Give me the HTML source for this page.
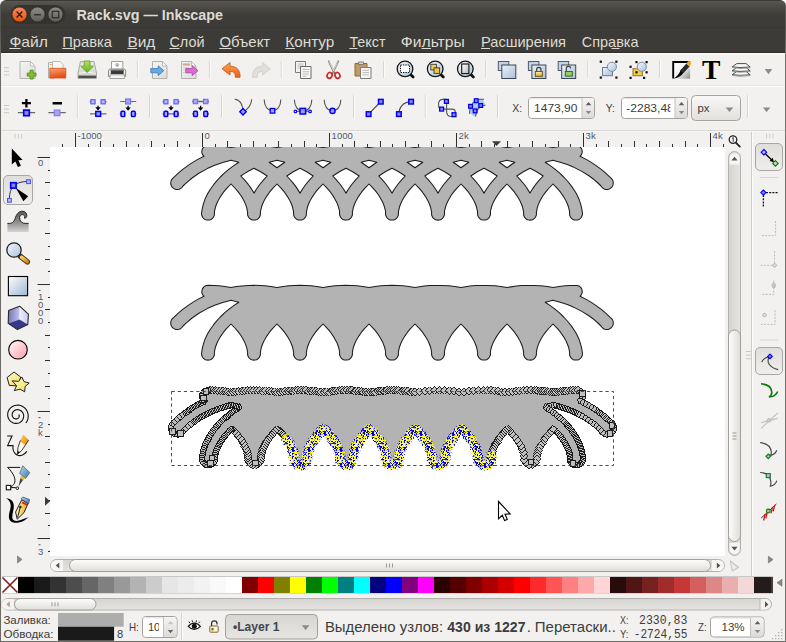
<!DOCTYPE html>
<html lang="ru"><head><meta charset="utf-8"><title>Rack.svg — Inkscape</title>
<style>
html,body{margin:0;padding:0;background:#fff;}
body{width:786px;height:642px;overflow:hidden;position:relative;font-family:"Liberation Sans",sans-serif;}
#win{position:absolute;left:0;top:0;width:786px;height:642px;background:#f2f1f0;border-radius:6px 6px 0 0;overflow:hidden;}
.abs{position:absolute;}
svg{position:absolute;left:0;top:0;overflow:visible;}
text{font-family:"Liberation Sans",sans-serif;}
.mono{font-family:"Liberation Mono",monospace;}
</style></head>
<body><div id="win">
<div id="titlebar" class="abs" style="left:0;top:0;width:786px;height:28px;background:linear-gradient(#3a3934 0,#3a3934 1px,#5b5a54 1px,#55544e 2px,#3d3c38 15px,#3c3b37 27px,#33322e 28px);"></div>
<div id="menubar" class="abs" style="left:0;top:28px;width:786px;height:25px;background:#3c3b37;"></div>
<div class="abs" style="left:0;top:52px;width:786px;height:1px;background:#2e2d2a;"></div>
<div class="abs" style="left:0;top:53px;width:786px;height:1px;background:#fcfcfb;"></div>
<div class="abs" style="left:0;top:5px;width:1px;height:637px;background:linear-gradient(#5a5954 0,#55544f 24px,#6b6a65 48px);"></div>
<div class="abs" style="left:785px;top:5px;width:1px;height:637px;background:linear-gradient(#5f5e58 0,#5a5954 24px,#74736e 48px);"></div>
<div class="abs" style="left:0;top:641px;width:786px;height:1px;background:#6e6d69;"></div>
<svg width="786" height="56" viewBox="0 0 786 56"><defs><linearGradient id="gclose" x1="0" y1="0" x2="0" y2="1"><stop offset="0" stop-color="#f58b5e"/><stop offset="1" stop-color="#e8520c"/></linearGradient><linearGradient id="gbtn" x1="0" y1="0" x2="0" y2="1"><stop offset="0" stop-color="#8e8d86"/><stop offset="1" stop-color="#5f5e58"/></linearGradient></defs><rect x="10.5" y="5" width="55" height="19" rx="9.5" fill="#34332f"/><circle cx="19.5" cy="14.5" r="7.5" fill="url(#gclose)" stroke="#3a2a22" stroke-width="0.8"/><path d="M16.6,11.6l5.8,5.8M22.4,11.6l-5.8,5.8" stroke="#3a1505" stroke-width="1.4" fill="none"/><circle cx="37.5" cy="14.5" r="7.5" fill="url(#gbtn)" stroke="#2f2e2a" stroke-width="0.8"/><path d="M34,14.8h7" stroke="#33322e" stroke-width="1.5"/><circle cx="55.5" cy="14.5" r="7.5" fill="url(#gbtn)" stroke="#2f2e2a" stroke-width="0.8"/><rect x="52.3" y="11.3" width="6.4" height="6.4" fill="none" stroke="#33322e" stroke-width="1.3"/><text x="76.5" y="20" font-size="15" fill="#dfdbd2" font-weight="bold" textLength="146.5" lengthAdjust="spacingAndGlyphs">Rack.svg — Inkscape</text><text x="9.4" y="47.3" font-size="15" fill="#dfdbd2" font-weight="normal" textLength="38.5" lengthAdjust="spacingAndGlyphs">Файл</text><rect x="9.4" y="48" width="11.1" height="1" fill="#dfdbd2"/><text x="62.3" y="47.3" font-size="15" fill="#dfdbd2" font-weight="normal" textLength="49.6" lengthAdjust="spacingAndGlyphs">Правка</text><rect x="62.3" y="48" width="11.2" height="1" fill="#dfdbd2"/><text x="127.4" y="47.3" font-size="15" fill="#dfdbd2" font-weight="normal" textLength="27.9" lengthAdjust="spacingAndGlyphs">Вид</text><rect x="127.4" y="48" width="9.6" height="1" fill="#dfdbd2"/><text x="169.4" y="47.3" font-size="15" fill="#dfdbd2" font-weight="normal" textLength="35.1" lengthAdjust="spacingAndGlyphs">Слой</text><rect x="169.4" y="48" width="10.1" height="1" fill="#dfdbd2"/><text x="219.4" y="47.3" font-size="15" fill="#dfdbd2" font-weight="normal" textLength="50.8" lengthAdjust="spacingAndGlyphs">Объект</text><rect x="219.4" y="48" width="12.1" height="1" fill="#dfdbd2"/><text x="285.3" y="47.3" font-size="15" fill="#dfdbd2" font-weight="normal" textLength="49.0" lengthAdjust="spacingAndGlyphs">Контур</text><rect x="285.3" y="48" width="9.7" height="1" fill="#dfdbd2"/><text x="349.4" y="47.3" font-size="15" fill="#dfdbd2" font-weight="normal" textLength="36.1" lengthAdjust="spacingAndGlyphs">Текст</text><rect x="349.4" y="48" width="8.1" height="1" fill="#dfdbd2"/><text x="400.8" y="47.3" font-size="15" fill="#dfdbd2" font-weight="normal" textLength="64.0" lengthAdjust="spacingAndGlyphs">Фильтры</text><rect x="421.5" y="48" width="9.5" height="1" fill="#dfdbd2"/><text x="481" y="47.3" font-size="15" fill="#dfdbd2" font-weight="normal" textLength="85" lengthAdjust="spacingAndGlyphs">Расширения</text><rect x="481" y="48" width="9" height="1" fill="#dfdbd2"/><text x="581.8" y="47.3" font-size="15" fill="#dfdbd2" font-weight="normal" textLength="56.7" lengthAdjust="spacingAndGlyphs">Справка</text><rect x="611.5" y="48" width="8.0" height="1" fill="#dfdbd2"/></svg><svg width="786" height="642" viewBox="0 0 786 642"><defs><linearGradient id="gpaper" x1="0" y1="0" x2="1" y2="1"><stop offset="0" stop-color="#f6f6f5"/><stop offset="1" stop-color="#dcdcda"/></linearGradient><linearGradient id="gfolder" x1="0" y1="0" x2="0.300" y2="1"><stop offset="0" stop-color="#f9a672"/><stop offset="1" stop-color="#e54c14"/></linearGradient><linearGradient id="gdrive" x1="0" y1="0" x2="0" y2="1"><stop offset="0" stop-color="#e9e9e7"/><stop offset="1" stop-color="#cfcfcd"/></linearGradient><linearGradient id="ggreen" x1="0" y1="0" x2="0" y2="1"><stop offset="0" stop-color="#b4e070"/><stop offset="1" stop-color="#62b41c"/></linearGradient><linearGradient id="gorange" x1="0" y1="0" x2="0" y2="1"><stop offset="0" stop-color="#fba55a"/><stop offset="1" stop-color="#e8601a"/></linearGradient><linearGradient id="glens" x1="0" y1="0" x2="1" y2="1"><stop offset="0" stop-color="#f4f8fc"/><stop offset="1" stop-color="#a9c3de"/></linearGradient><linearGradient id="gpage" x1="0" y1="0" x2="1" y2="1"><stop offset="0" stop-color="#ffffff"/><stop offset="1" stop-color="#b8b8b8"/></linearGradient><linearGradient id="gbluebox" x1="0" y1="0" x2="1" y2="1"><stop offset="0" stop-color="#eef3f9"/><stop offset="1" stop-color="#a9bfd8"/></linearGradient><linearGradient id="gyellow" x1="0" y1="0" x2="0" y2="1"><stop offset="0" stop-color="#fff3b0"/><stop offset="1" stop-color="#eaa410"/></linearGradient><linearGradient id="gfs" x1="0" y1="0" x2="1" y2="1"><stop offset="0" stop-color="#ffffff"/><stop offset="0.55" stop-color="#f4f4f4"/><stop offset="1" stop-color="#8a8a8a"/></linearGradient><linearGradient id="gspin" x1="0" y1="0" x2="0" y2="1"><stop offset="0" stop-color="#f6f5f4"/><stop offset="1" stop-color="#dddbd8"/></linearGradient><linearGradient id="gcombo" x1="0" y1="0" x2="0" y2="1"><stop offset="0" stop-color="#f9f8f7"/><stop offset="1" stop-color="#e2e0dd"/></linearGradient><linearGradient id="gpressed" x1="0" y1="0" x2="0" y2="1"><stop offset="0" stop-color="#e0dedb"/><stop offset="1" stop-color="#efeeec"/></linearGradient><linearGradient id="gtweak" x1="0" y1="0" x2="0" y2="1"><stop offset="0" stop-color="#5a5a5a"/><stop offset="0.5" stop-color="#8a8a8a"/><stop offset="1" stop-color="#d4d4d4"/></linearGradient><linearGradient id="grect" x1="0" y1="0" x2="1" y2="1"><stop offset="0" stop-color="#ffffff"/><stop offset="1" stop-color="#9db6d0"/></linearGradient><linearGradient id="gpink" x1="0" y1="0" x2="1" y2="1"><stop offset="0" stop-color="#ffffff"/><stop offset="1" stop-color="#ff98a8"/></linearGradient><linearGradient id="gstar" x1="0" y1="0" x2="1" y2="1"><stop offset="0" stop-color="#fffccc"/><stop offset="1" stop-color="#efdc58"/></linearGradient><linearGradient id="gbox1" x1="0" y1="0" x2="1" y2="0"><stop offset="0" stop-color="#7474bc"/><stop offset="1" stop-color="#c4c4ec"/></linearGradient><linearGradient id="gbox2" x1="0" y1="0" x2="1" y2="0"><stop offset="0" stop-color="#f0f0ff"/><stop offset="1" stop-color="#c8c8f0"/></linearGradient><linearGradient id="ghandle" x1="0" y1="0" x2="1" y2="1"><stop offset="0" stop-color="#ffd060"/><stop offset="1" stop-color="#e08800"/></linearGradient><linearGradient id="gpenblue" x1="0" y1="0" x2="1" y2="1"><stop offset="0" stop-color="#b8dcf0"/><stop offset="1" stop-color="#3878a8"/></linearGradient><linearGradient id="gnib" x1="0" y1="0" x2="1" y2="0"><stop offset="0" stop-color="#fff8c0"/><stop offset="1" stop-color="#e8a818"/></linearGradient></defs><rect x="1" y="85" width="784" height="1" fill="#e9e8e6"/><rect x="1" y="86" width="784" height="1" fill="#fcfcfb"/><rect x="4" y="67.2" width="5" height="1" fill="#c9c7c3"/><rect x="4" y="70.8" width="5" height="1" fill="#c9c7c3"/><rect x="4" y="74.4" width="5" height="1" fill="#c9c7c3"/><rect x="136.9" y="61" width="1" height="17" fill="#d6d4d0"/><rect x="137.9" y="61" width="1" height="17" fill="#fbfbfa"/><rect x="208.9" y="61" width="1" height="17" fill="#d6d4d0"/><rect x="209.9" y="61" width="1" height="17" fill="#fbfbfa"/><rect x="280.8" y="61" width="1" height="17" fill="#d6d4d0"/><rect x="281.8" y="61" width="1" height="17" fill="#fbfbfa"/><rect x="383.1" y="61" width="1" height="17" fill="#d6d4d0"/><rect x="384.1" y="61" width="1" height="17" fill="#fbfbfa"/><rect x="485.2" y="61" width="1" height="17" fill="#d6d4d0"/><rect x="486.2" y="61" width="1" height="17" fill="#fbfbfa"/><rect x="587.3" y="61" width="1" height="17" fill="#d6d4d0"/><rect x="588.3" y="61" width="1" height="17" fill="#fbfbfa"/><rect x="659.1" y="61" width="1" height="17" fill="#d6d4d0"/><rect x="660.1" y="61" width="1" height="17" fill="#fbfbfa"/><g id="i-new"><path d="M20,61.500h10.500l4.500,4.500v12.500h-15z" fill="url(#gpaper)" stroke="#b4b4b0" stroke-width="1"/><path d="M30.500,61.500v4.500h4.500z" fill="#fbfbfb" stroke="#b4b4b0" stroke-width="0.800" stroke-linejoin="round"/><path d="M30.100,70.200h3v2.900h2.900v3h-2.900v2.900h-3v-2.900h-2.900v-3h2.900z" fill="#84bd3a" stroke="#5c9414" stroke-width="1" stroke-linejoin="round"/></g><g id="i-open"><path d="M48.500,62.500h6v15.500h-6z" fill="#f0f0ee" stroke="#b0b0ac" stroke-width="1"/><path d="M52.500,61.500h7.500l3,3v12h-10.500z" fill="#f6f6f4" stroke="#b4b4b0" stroke-width="0.900"/><rect x="49.800" y="64" width="2" height="1" fill="#f0a050"/><path d="M49.800,68.300h16v9.700h-16z" fill="url(#gfolder)" stroke="#dc4e1a" stroke-width="0.800"/></g><g id="i-save"><path d="M80.500,61.500h13.500l2.500,11.500v5.200h-18.500v-5.200z" fill="url(#gdrive)" stroke="#a9a9a6" stroke-width="1"/><path d="M78.300,75.200h17.900v3.200h-17.900z" fill="#8c8c8a"/><rect x="78.600" y="76.300" width="17.300" height="1.300" fill="#2e2e2e"/><path d="M79,73.500q8,-3 16.500,0" fill="none" stroke="#f4f4f2" stroke-width="1"/><path d="M84.200,61h5.800v5.200h3.400l-6.300,6.200l-6.300,-6.200h3.400z" fill="url(#ggreen)" stroke="#6aa51c" stroke-width="0.900" stroke-linejoin="round"/></g><g id="i-print"><path d="M111.500,61.500h11.300v8h-11.300z" fill="#fbfbfa" stroke="#a0a09c" stroke-width="1"/><path d="M114.700,64.600h5l-2.500,2.700z" fill="#a4a4a2"/><rect x="116.200" y="63" width="2" height="1.800" fill="#b4b4b2"/><path d="M108.500,71q0,-2 2,-2h13.200q2,0 2,2v5.500h-17.200z" fill="#ededeb" stroke="#8a8a88" stroke-width="1"/><rect x="110.800" y="69.800" width="12.800" height="4.200" fill="#3a3a3a"/><rect x="110.800" y="69.800" width="12.800" height="1.200" fill="#6a6a68"/><path d="M110,74.800h14.500v3.700h-14.500z" fill="#f6f6f4" stroke="#9a9a98" stroke-width="0.900"/><rect x="123.500" y="74.300" width="1.400" height="1.200" fill="#7fd04f"/></g><g id="i-import"><path d="M152.5,61.5h10l4.5,4.5v12.5h-14.5z" fill="url(#gpaper)" stroke="#b0b0ac" stroke-width="1"/><path d="M162.5,61.5v4.5h4.5z" fill="#fbfbfb" stroke="#b0b0ac" stroke-width="0.8"/><path d="M150.8,68.6h7.4v-2.8l5.6,4.9l-5.6,4.9v-2.8h-7.4z" fill="#6aa8e2" stroke="#3f80c4" stroke-width="0.9"/></g><g id="i-export"><path d="M181.5,61.5h10l4.5,4.5v12.5h-14.5z" fill="url(#gpaper)" stroke="#b0b0ac" stroke-width="1"/><path d="M191.5,61.5v4.5h4.5z" fill="#fbfbfb" stroke="#b0b0ac" stroke-width="0.8"/><rect x="183" y="63.4" width="7" height="2.2" fill="#d9a48f"/><path d="M183,67.5h6M183,70h4M183,72.5h4" stroke="#c9c9c5" stroke-width="0.9"/><path d="M185.8,68.6h6.4v-2.8l5.8,4.9l-5.8,4.9v-2.8h-6.4z" fill="#d86ed2" stroke="#b646ae" stroke-width="0.9"/></g><g id="i-undo"><path d="M222,68.800L230,62.500V66.200C236.600,66.200 240.300,70 240.100,77.200H235.300C235.500,73.200 233.800,71.400 230,71.400V75.100Z" fill="url(#gorange)" stroke="#cf5c14" stroke-width="0.900" stroke-linejoin="round"/></g><g id="i-redo"><path d="M270.500,68.800L262.500,62.500V66.200C255.900,66.200 252.200,70 252.400,77.200H257.200C257,73.200 258.700,71.400 262.500,71.400V75.100Z" fill="#dedfd9" stroke="#d0d1cb" stroke-width="0.900" stroke-linejoin="round"/></g><g id="i-copy"><path d="M295.5,61.5h10v11h-10z" fill="#f4f4f2" stroke="#7a7a78" stroke-width="1"/><path d="M297.5,64h6M297.5,66h6M297.5,68h3" stroke="#b5b5b2" stroke-width="0.9"/><path d="M300.5,66.5h10.5v12h-10.5z" fill="#f8f8f6" stroke="#6a6a68" stroke-width="1"/><path d="M302.5,69.5h6.5M302.5,71.8h6.5M302.5,74.1h6.5M302.5,76.3h4" stroke="#b0b0ad" stroke-width="0.9"/></g><g id="i-cut"><path d="M328.8,61.3l5.3,11.4M338.2,61.3l-5.3,11.4" stroke="#8d8d8b" stroke-width="1.9" stroke-linecap="round"/><path d="M329.3,61.5l4.4,9.5M337.7,61.5l-4.4,9.5" stroke="#e9e9e7" stroke-width="0.8"/><ellipse cx="329.6" cy="75.4" rx="2.4" ry="3" fill="none" stroke="#cc2a2a" stroke-width="1.7" transform="rotate(25 329.6 75.4)"/><ellipse cx="337.4" cy="75.4" rx="2.4" ry="3" fill="none" stroke="#cc2a2a" stroke-width="1.7" transform="rotate(-25 337.4 75.4)"/></g><g id="i-paste"><path d="M355,63.5h12v12.5h-12z" fill="#c49a62" stroke="#8a6a3c" stroke-width="1"/><path d="M358.5,62h5v2.5h-5z" fill="#d8d8d6" stroke="#77777a" stroke-width="0.9"/><path d="M360.5,67.5h10.5v11h-10.5z" fill="#f6f6f4" stroke="#7d7d7b" stroke-width="1"/><path d="M362.5,70.3h6.5M362.5,72.6h6.5M362.5,74.9h6.5" stroke="#b5b5b2" stroke-width="0.9"/></g><g><path d="M410.8,74.7l2.300,2.300" stroke="#111" stroke-width="2.800" stroke-linecap="round"/><circle cx="405" cy="68.9" r="7.800" fill="url(#glens)" stroke="#141414" stroke-width="1.300"/><rect x="400.5" y="65" width="9" height="7.5" fill="#fff" stroke="#111" stroke-width="1" stroke-dasharray="1.4 1"/></g><g><path d="M441.0,74.7l2.300,2.300" stroke="#111" stroke-width="2.800" stroke-linecap="round"/><circle cx="435.2" cy="68.9" r="7.800" fill="url(#glens)" stroke="#141414" stroke-width="1.300"/><rect x="430.8" y="64.3" width="5.6" height="5.6" fill="#f0d060" stroke="#3a3a3a" stroke-width="0.9"/><rect x="434" y="67.8" width="5.6" height="5.6" fill="#f3c23a" stroke="#3a3a3a" stroke-width="0.9"/></g><g><path d="M471.1,74.7l2.300,2.300" stroke="#111" stroke-width="2.800" stroke-linecap="round"/><circle cx="465.3" cy="68.9" r="7.800" fill="url(#glens)" stroke="#141414" stroke-width="1.300"/><rect x="461.7" y="64" width="7.2" height="9.6" fill="url(#gpage)" stroke="#111" stroke-width="1.1"/></g><g><rect x="498.3" y="61.5" width="10.5" height="9" fill="#c4d3e4" stroke="#4e5a6a" stroke-width="1"/><rect x="501.8" y="65" width="14" height="13.5" fill="url(#gbluebox)" stroke="#3c4654" stroke-width="1"/></g><g><rect x="528.4" y="61.5" width="10.5" height="9" fill="#c4d3e4" stroke="#4e5a6a" stroke-width="1"/><rect x="531.9" y="65" width="14" height="13.5" fill="url(#gbluebox)" stroke="#3c4654" stroke-width="1"/><path d="M536.600,71.500v-2a2.200,2.200 0 0 1 4.400,0v2" fill="none" stroke="#444" stroke-width="1.200"/><rect x="535.300" y="71.500" width="7" height="4.800" fill="url(#gyellow)" stroke="#5e4a10" stroke-width="0.900"/></g><g><rect x="558.2" y="61.5" width="10.5" height="9" fill="#c4d3e4" stroke="#4e5a6a" stroke-width="1"/><rect x="561.7" y="65" width="14" height="13.5" fill="url(#gbluebox)" stroke="#3c4654" stroke-width="1"/><path d="M566.300,71.500v-2.600a2.200,2.200 0 0 1 4.400,-0.600" fill="none" stroke="#444" stroke-width="1.200"/><rect x="565.300" y="71.500" width="7" height="4.600" fill="#8fd05e" stroke="#2f5e14" stroke-width="0.900"/></g><g id="i-group"><rect x="602.500" y="67.500" width="10" height="8.200" fill="url(#gbluebox)" stroke="#6d7f95" stroke-width="1"/><circle cx="611.900" cy="66.800" r="4.600" fill="url(#glens)" stroke="#7d8ea4" stroke-width="1"/><rect x="599.7" y="60.6" width="2.200" height="2.200" fill="#111"/><rect x="615.3" y="60.6" width="2.200" height="2.200" fill="#111"/><rect x="599.7" y="76.5" width="2.200" height="2.200" fill="#111"/><rect x="615.3" y="76.5" width="2.200" height="2.200" fill="#111"/></g><g id="i-ungroup"><rect x="633" y="68.700" width="9.400" height="7" fill="#f4cc48" stroke="#8a7630" stroke-width="1"/><circle cx="641.800" cy="66.800" r="4.600" fill="url(#glens)" stroke="#7d8ea4" stroke-width="1"/><rect x="629.5" y="65.7" width="2.200" height="2.200" fill="#111"/><rect x="635.4" y="61.0" width="2.200" height="2.200" fill="#111"/><rect x="645.5" y="61.0" width="2.200" height="2.200" fill="#111"/><rect x="645.5" y="71.2" width="2.200" height="2.200" fill="#111"/><rect x="629.5" y="76.8" width="2.200" height="2.200" fill="#111"/><rect x="643.0" y="76.8" width="2.200" height="2.200" fill="#111"/><rect x="635.4" y="71.2" width="2.200" height="2.200" fill="#111"/></g><g id="i-fill"><path d="M672.500,61.300h17.600v17.300h-17.600z" fill="url(#gfs)" stroke="none"/><path d="M673.200,78.600v-16.600h16.900" fill="none" stroke="#000" stroke-width="1.900"/><path d="M673.800,78.500c3.600,-0.200 7.400,-2 10,-6.200l-3,-2.600c-1.400,3.800 -3.800,6.600 -7,8.800z" fill="#0a0a0a"/><path d="M680.200,70.400l6.200,-7l3.300,2.900l-6.300,6.900z" fill="#2a2a2a"/><path d="M686.200,63.600l2.600,-2.800q2.200,0.500 2.400,2.900l-2,2.700z" fill="#f4a91c"/></g><text x="702" y="79" font-size="27" font-weight="bold" fill="#000" textLength="18.4" lengthAdjust="spacingAndGlyphs" style="font-family:'Liberation Serif',serif">T</text><g id="i-layers"><path d="M736.800,71.4l9.200,0l4.200,3.400l-10,0.500l-8,-0.600z" fill="#f8f8f6" stroke="#3a3a3a" stroke-width="0.900" stroke-linejoin="round"/><path d="M732.400,74.9l7.800,0.700l10,-0.600v1l-10,0.700l-7.800,-0.800z" fill="#9a9a98"/><path d="M736.800,67.5l9.200,0l4.200,3.400l-10,0.500l-8,-0.600z" fill="#f8f8f6" stroke="#3a3a3a" stroke-width="0.900" stroke-linejoin="round"/><path d="M732.400,71.0l7.800,0.700l10,-0.600v1l-10,0.700l-7.800,-0.800z" fill="#9a9a98"/><path d="M736.800,63.6l9.200,0l4.200,3.400l-10,0.500l-8,-0.600z" fill="#f8f8f6" stroke="#3a3a3a" stroke-width="0.900" stroke-linejoin="round"/><path d="M732.400,67.1l7.800,0.700l10,-0.600v1l-10,0.700l-7.800,-0.800z" fill="#9a9a98"/></g><path d="M764.7,69h7.6l-3.8,5.2z" fill="#8c8b86"/><rect x="4" y="105.0" width="5" height="1" fill="#c9c7c3"/><rect x="4" y="108.6" width="5" height="1" fill="#c9c7c3"/><rect x="4" y="112.2" width="5" height="1" fill="#c9c7c3"/><rect x="76.9" y="95" width="1" height="23" fill="#d6d4d0"/><rect x="77.9" y="95" width="1" height="23" fill="#fbfbfa"/><rect x="149.0" y="95" width="1" height="23" fill="#d6d4d0"/><rect x="150.0" y="95" width="1" height="23" fill="#fbfbfa"/><rect x="221.0" y="95" width="1" height="23" fill="#d6d4d0"/><rect x="222.0" y="95" width="1" height="23" fill="#fbfbfa"/><rect x="353.1" y="95" width="1" height="23" fill="#d6d4d0"/><rect x="354.1" y="95" width="1" height="23" fill="#fbfbfa"/><rect x="424.8" y="95" width="1" height="23" fill="#d6d4d0"/><rect x="425.8" y="95" width="1" height="23" fill="#fbfbfa"/><rect x="497.0" y="95" width="1" height="23" fill="#d6d4d0"/><rect x="498.0" y="95" width="1" height="23" fill="#fbfbfa"/><rect x="747.1" y="95" width="1" height="23" fill="#d6d4d0"/><rect x="748.1" y="95" width="1" height="23" fill="#fbfbfa"/><path d="M26.4,99v8.4M21.9,103.2h9" stroke="#000" stroke-width="2.3"/><path d="M17.9,112.6h17.2" stroke="#6a6a6a" stroke-width="1.2"/><rect x="23.70" y="110.10" width="5.6" height="5.6" fill="#8a8ad8" stroke="#0000ff" stroke-width="1.7"/><path d="M52.6,103.2h9.4" stroke="#000" stroke-width="2.5"/><path d="M48.3,112.6h17.5" stroke="#6a6a6a" stroke-width="1.2"/><rect x="54.30" y="110.10" width="5.6" height="5.6" fill="#a6a6ee" stroke="#7c7cf4" stroke-width="1.2"/><path d="M89.6,101.8h4M102,101.8h4.6" stroke="#6a6a6a" stroke-width="1.1"/><rect x="90.90" y="99.70" width="4.2" height="4.2" fill="#b8b8f4" stroke="#4a4aff" stroke-width="1.0"/><rect x="101.00" y="99.70" width="4.2" height="4.2" fill="#b8b8f4" stroke="#4a4aff" stroke-width="1.0"/><path d="M98,105.8V108.4" stroke="#000" stroke-width="1.300"/><path d="M95.3,107.2h5.400l-2.700,3.200z" fill="#000"/><path d="M90,113.9h16.5" stroke="#6a6a6a" stroke-width="1.2"/><rect x="95.80" y="111.50" width="4.8" height="4.8" fill="#9c9ce4" stroke="#0000ff" stroke-width="1.5"/><path d="M120.2,101.5h16" stroke="#6a6a6a" stroke-width="1.2"/><rect x="125.60" y="99.00" width="5" height="5" fill="#a6a6ee" stroke="#6c6cf8" stroke-width="1.1"/><path d="M128.1,105.8V108.8" stroke="#000" stroke-width="1.300"/><path d="M125.39999999999999,107.6h5.400l-2.700,3.200z" fill="#000"/><path d="M119.8,113.9h2M134,113.9h2.4" stroke="#6a6a6a" stroke-width="1.1"/><rect x="121.00" y="111.30" width="3.800" height="5.200" rx="1.100" fill="#a8a8e8" stroke="#0000ff" stroke-width="1.500"/><rect x="131.40" y="111.30" width="3.800" height="5.200" rx="1.100" fill="#a8a8e8" stroke="#0000ff" stroke-width="1.500"/><path d="M162.4,101.8h3M177,101.8h2.6" stroke="#6a6a6a" stroke-width="1.1"/><rect x="163.80" y="99.70" width="4.2" height="4.2" fill="#b8b8f4" stroke="#4a4aff" stroke-width="1.0"/><rect x="174.00" y="99.70" width="4.2" height="4.2" fill="#b8b8f4" stroke="#4a4aff" stroke-width="1.0"/><path d="M171,105.8V108.4" stroke="#000" stroke-width="1.300"/><path d="M168.3,107.2h5.400l-2.700,3.200z" fill="#000"/><path d="M162.6,113.9h16.6" stroke="#6a6a6a" stroke-width="1.4"/><rect x="164.00" y="111.30" width="3.800" height="5.200" rx="1.100" fill="#a8a8e8" stroke="#0000ff" stroke-width="1.500"/><rect x="174.20" y="111.30" width="3.800" height="5.200" rx="1.100" fill="#a8a8e8" stroke="#0000ff" stroke-width="1.500"/><path d="M192.2,101.5h16.8" stroke="#6a6a6a" stroke-width="1.3"/><rect x="193.30" y="99.30" width="4.4" height="4.4" fill="#a6a6ee" stroke="#6c6cf8" stroke-width="1.1"/><rect x="203.50" y="99.30" width="4.4" height="4.4" fill="#a6a6ee" stroke="#6c6cf8" stroke-width="1.1"/><path d="M200.6,105.8V108.8" stroke="#000" stroke-width="1.300"/><path d="M197.9,107.6h5.400l-2.700,3.200z" fill="#000"/><path d="M192.2,113.9h2M207,113.9h2" stroke="#6a6a6a" stroke-width="1.1"/><rect x="193.60" y="111.30" width="3.800" height="5.200" rx="1.100" fill="#a8a8e8" stroke="#0000ff" stroke-width="1.500"/><rect x="203.80" y="111.30" width="3.800" height="5.200" rx="1.100" fill="#a8a8e8" stroke="#0000ff" stroke-width="1.500"/><path d="M234.7,99.2c5.6,0.4 8,5 8.3,12.7c5.6,-3 8.4,-7.6 8.7,-12.7" fill="none" stroke="#555" stroke-width="1.1"/><path d="M243,108.6l3.2,3.2l-3.2,3.2l-3.2,-3.2z" fill="#9c9ce0" stroke="#0000ff" stroke-width="1.4"/><path d="M264.2,99.6c0,6.4 3.2,11 8.3,11s8.3,-4.6 8.3,-11" fill="none" stroke="#555" stroke-width="1.1"/><rect x="270.20" y="108.50" width="4.6" height="4.6" fill="#a8a8ee" stroke="#0000ff" stroke-width="1.3"/><path d="M294.4,99.8c0,6.6 3.4,11.2 8.7,11.2s8.7,-4.6 8.7,-11.2" fill="none" stroke="#555" stroke-width="1.1"/><path d="M296,111.3h14" stroke="#555" stroke-width="1"/><rect x="300.00" y="108.40" width="5.6" height="5.6" fill="#9c9ce8" stroke="#0000ff" stroke-width="1.5"/><circle cx="295.4" cy="111.4" r="1.3" fill="#fff" stroke="#0000ff" stroke-width="1.2"/><circle cx="310.1" cy="111.4" r="1.3" fill="#fff" stroke="#0000ff" stroke-width="1.2"/><path d="M324.2,99.8c0,6.4 3.2,11 8.3,11s8.3,-4.6 8.3,-11" fill="none" stroke="#555" stroke-width="1.1"/><circle cx="332.5" cy="110.9" r="2.6" fill="#9c9ce8" stroke="#0000ff" stroke-width="1.4"/><path d="M368.6,114.1L380.8,101.7" stroke="#444" stroke-width="1.2"/><rect x="366.30" y="111.80" width="4.6" height="4.6" fill="#8a8ad8" stroke="#0000ff" stroke-width="1.5"/><rect x="378.50" y="99.40" width="4.6" height="4.6" fill="#8a8ad8" stroke="#0000ff" stroke-width="1.5"/><path d="M398.9,114.1c0,-7 4.5,-12 12.2,-12.4" fill="none" stroke="#444" stroke-width="1.2"/><rect x="396.60" y="111.80" width="4.6" height="4.6" fill="#8a8ad8" stroke="#0000ff" stroke-width="1.5"/><rect x="408.80" y="99.40" width="4.6" height="4.6" fill="#8a8ad8" stroke="#0000ff" stroke-width="1.5"/><path d="M446.4,99.4h-3.2q-4.6,0 -4.6,4.6v1.2q0,3.9 3,3.9h10.5q3.2,0 3.2,3.2v2.4M446.6,101.4v9.6q0,5.5 4.5,5.5h3" fill="none" stroke="#555" stroke-width="1.1"/><rect x="444.45" y="99.45" width="3.9" height="3.9" fill="#8a8ad8" stroke="#0000ff" stroke-width="1.3"/><rect x="439.65" y="107.15" width="3.9" height="3.9" fill="#8a8ad8" stroke="#0000ff" stroke-width="1.3"/><rect x="452.05" y="112.75" width="3.9" height="3.9" fill="#8a8ad8" stroke="#0000ff" stroke-width="1.3"/><path d="M470,113.6l0.4,-6.6l5,-7.4h7.4l2,4.4l-4.4,2.6l-4.6,7.6l-0.6,2.6z" fill="#a9c9ea" stroke="none"/><path d="M469.4,113.8c0.2,-6 2.4,-10.8 6.4,-13.6M475.6,116.6c0.2,-6.4 3.6,-10.6 10,-11.6M476,99.3h8" fill="none" stroke="#555" stroke-width="1.1"/><rect x="474.35" y="98.85" width="3.7" height="3.7" fill="#8a8ad8" stroke="#0000ff" stroke-width="1.3"/><rect x="468.65" y="104.45" width="3.7" height="3.7" fill="#8a8ad8" stroke="#0000ff" stroke-width="1.3"/><rect x="478.85" y="103.65" width="3.7" height="3.7" fill="#8a8ad8" stroke="#0000ff" stroke-width="1.3"/><rect x="473.25" y="109.05" width="3.7" height="3.7" fill="#8a8ad8" stroke="#0000ff" stroke-width="1.3"/><text x="512.2" y="111.8" font-size="11" fill="#3c3c3c" font-weight="normal" textLength="9.9" lengthAdjust="spacingAndGlyphs">X:</text><rect x="528.5" y="97.5" width="66" height="21" rx="3.2" fill="#fff" stroke="#a3a19d" stroke-width="1"/><path d="M582,98H591.5a2.5,2.5 0 0 1 2.5,2.5V115.5a2.5,2.5 0 0 1 -2.5,2.5H582z" fill="url(#gspin)"/><rect x="581.5" y="98" width="1" height="20" fill="#c4c2be"/><path d="M585.7,105.3h5.600l-2.800,-3.300z" fill="#5f5e5a"/><path d="M585.7,110.9h5.600l-2.800,3.300z" fill="#8a8985"/><rect x="529" y="98" width="52.5" height="1.2" fill="#e4e2df" opacity=".8"/><text x="534.1" y="111.8" font-size="11" fill="#3c3c3c" font-weight="normal" textLength="43.3" lengthAdjust="spacingAndGlyphs">1473,90</text><text x="605.7" y="111.8" font-size="11" fill="#3c3c3c" font-weight="normal" textLength="9.1" lengthAdjust="spacingAndGlyphs">Y:</text><rect x="621.5" y="97.5" width="66" height="21" rx="3.2" fill="#fff" stroke="#a3a19d" stroke-width="1"/><path d="M675,98H684.5a2.5,2.5 0 0 1 2.5,2.5V115.5a2.5,2.5 0 0 1 -2.5,2.5H675z" fill="url(#gspin)"/><rect x="674.5" y="98" width="1" height="20" fill="#c4c2be"/><path d="M678.7,105.3h5.600l-2.800,-3.300z" fill="#5f5e5a"/><path d="M678.7,110.9h5.600l-2.800,3.300z" fill="#8a8985"/><rect x="622" y="98" width="52.5" height="1.2" fill="#e4e2df" opacity=".8"/><clipPath id="cy"><rect x="622" y="98" width="48.400" height="20"/></clipPath><g clip-path="url(#cy)"><text x="626.3" y="111.8" font-size="11" fill="#3c3c3c" font-weight="normal" textLength="47.5" lengthAdjust="spacingAndGlyphs">-2283,48</text></g><rect x="691.5" y="95.5" width="49" height="25" rx="4" fill="url(#gcombo)" stroke="#a6a4a0" stroke-width="1"/><text x="697.5" y="111.8" font-size="11" fill="#3c3c3c" font-weight="normal" textLength="12" lengthAdjust="spacingAndGlyphs">px</text><path d="M725.7,107.4h7.6l-3.8,4.6z" fill="#8c8b86"/><path d="M762.9,107.4h7.4l-3.7,4.6z" fill="#8c8b86"/><rect x="14.5" y="134" width="1" height="4.5" fill="#cfcdc9"/><rect x="17.8" y="134" width="1" height="4.5" fill="#cfcdc9"/><rect x="21.1" y="134" width="1" height="4.5" fill="#cfcdc9"/><path d="M11.8,148.6V164.4L15.3,161.4L17.9,167L20.9,165.7L18.4,160.2L22.6,159.9Z" fill="#000"/><rect x="3.5" y="175.5" width="29" height="29" rx="4.5" fill="url(#gpressed)" stroke="#a9a7a3" stroke-width="1"/><path d="M9.4,198c0.2,-5 1.2,-8.5 3.8,-11.8c3,-3 7,-4.3 13,-4.7" fill="none" stroke="#333" stroke-width="1"/><rect x="10.70" y="182.70" width="5.4" height="5.4" fill="#8484dc" stroke="#0000ff" stroke-width="1.7"/><rect x="26.60" y="179.80" width="3.8" height="3.8" fill="#b8b8f4" stroke="#4a4aff" stroke-width="1.0"/><rect x="7.50" y="198.40" width="3.8" height="3.8" fill="#b8b8f4" stroke="#4a4aff" stroke-width="1.0"/><path d="M15.6,187.8L28.2,196.2L23.4,201.2Z" fill="#000"/><path d="M7.4,232V223.4h2.2c3.4,0 4.6,-2.4 6,-6.2c1.4,-3.8 3.6,-6 6.6,-6c3,0 4.6,2 4.6,4.4c0,1.6 -1,2.6 -2.2,2.6c0.6,-2.2 -0.6,-3.6 -2.4,-3.6c-2,0 -3,1.8 -2.4,4.6c0.6,2.6 2.6,4.2 5.4,4.2H28.6V232Z" fill="url(#gtweak)"/><path d="M7.4,223.4h2.2c3.4,0 4.6,-2.4 6,-6.2c1.4,-3.8 3.6,-6 6.6,-6c3,0 4.6,2 4.6,4.4c0,1.6 -1,2.6 -2.2,2.6c0.6,-2.2 -0.6,-3.6 -2.4,-3.6c-2,0 -3,1.8 -2.4,4.6c0.6,2.6 2.6,4.2 5.4,4.2H28.6" fill="none" stroke="#222" stroke-width="1"/><path d="M20,256l7.400,5.800" stroke="#3c3c3c" stroke-width="5.400" stroke-linecap="round"/><path d="M21.600,257.300l5.600,4.400" stroke="url(#ghandle)" stroke-width="3.600" stroke-linecap="round"/><circle cx="14" cy="250" r="7.2" fill="url(#glens)" stroke="#222" stroke-width="1.3"/><rect x="8.4" y="276.5" width="19.2" height="19.2" fill="url(#grect)" stroke="#000" stroke-width="1.1"/><path d="M19.6,306.2L28.4,314.2L27.8,324.4L17.4,329.6L8.2,323.4L8.6,310.4Z" fill="#e4e4fa" stroke="none"/><path d="M19.6,306.2L19.4,319.6L8.2,323.4L8.6,310.4Z" fill="url(#gbox1)"/><path d="M19.6,306.2L28.4,314.2L27.8,324.4L19.4,319.6Z" fill="url(#gbox2)"/><path d="M19.4,319.6L27.8,324.4L17.4,329.6L8.2,323.4Z" fill="#38388a"/><path d="M19.6,306.2L28.4,314.2L27.8,324.4L17.4,329.6L8.2,323.4L8.6,310.4Z" fill="none" stroke="#2a2a2a" stroke-width="1.1" stroke-linejoin="round"/><circle cx="18" cy="349.7" r="9.3" fill="url(#gpink)" stroke="#000" stroke-width="1.1"/><path d="M14,372L20.7,377L18.2,386L9.3,385.4L7.1,377.5Z" fill="url(#gstar)" stroke="#222" stroke-width="1" stroke-linejoin="round"/><path d="M21.8,377L24,381.6L29.2,383L25.2,386.4L24.6,391.8L20.2,389.2L14.2,390.6L16.6,385.8L12.2,380.8L18.6,381.4Z" fill="url(#gstar)" stroke="#222" stroke-width="1" stroke-linejoin="round"/><path d="M18.7,414.6 18.9,414.9 19.1,415.2 19.2,415.5 19.2,415.9 19.2,416.3 19.1,416.7 19.0,417.2 18.8,417.6 18.5,417.9 18.1,418.3 17.7,418.5 17.2,418.7 16.7,418.9 16.2,418.9 15.6,418.9 15.0,418.8 14.5,418.6 13.9,418.2 13.4,417.8 13.0,417.3 12.7,416.8 12.4,416.1 12.2,415.5 12.1,414.7 12.2,414.0 12.4,413.3 12.7,412.5 13.1,411.9 13.6,411.3 14.2,410.7 14.9,410.3 15.7,409.9 16.5,409.7 17.4,409.6 18.3,409.7 19.2,409.9 20.1,410.2 20.9,410.7 21.7,411.3 22.3,412.1 22.9,412.9 23.3,413.8 23.6,414.8 23.7,415.9 23.6,417.0 23.4,418.0 23.0,419.1 22.5,420.1 21.8,421.0 20.9,421.7 20.0,422.4 18.9,422.9 17.7,423.3 16.5,423.4 15.3,423.4 14.0,423.2 12.8,422.7 11.7,422.1 10.6,421.4 9.7,420.4 8.9,419.3 8.3,418.1 7.9,416.8 7.7,415.4 7.7,414.0 7.9,412.6 8.3,411.2 9.0,409.9 9.8,408.7 10.9,407.6 12.1,406.7 13.4,406.0 14.9,405.5 16.4,405.2 18.0,405.1 19.6,405.3 21.2,405.8 22.7,406.5 24.0,407.4 25.3,408.5 26.3,409.8 27.1,411.3 27.8,412.9 28.1,414.6 28.2,416.4 28.0,418.1 27.6,419.9 26.9,421.5 25.9,423.0" fill="none" stroke="#111" stroke-width="1.100" stroke-linejoin="round"/><path d="M7.2,436h4.8L7.6,445.6h5.4c-0.4,3.6 0.6,7.4 4,9.4c3.6,1.6 7.6,-0.4 9.8,-3.6" fill="none" stroke="#111" stroke-width="1.1"/><path d="M23.2,434.6L28.8,440L21.6,450.6L17.4,454.4L17.8,448Z" fill="#fff" stroke="none"/><path d="M23.2,434.6L28.8,440L25.4,445.2L19.8,441.4Z" fill="url(#ghandle)"/><path d="M19.8,441.4L25.4,445.2L21.6,450.6L17.4,454.4L17.8,448Z" fill="#fff8e8"/><path d="M17.4,454.4l0.2,-3.4l2.6,1z" fill="#111"/><path d="M20.4,440.4L18,447.4L17.4,454.4L21.8,450.4L28.6,440.2" fill="none" stroke="#222" stroke-width="0.9"/><path d="M7.6,467.4H20.2M7.6,467.4c5,5 8,10 7.2,14.6c-0.4,2.2 -1.4,3.2 -3.8,4.6" fill="none" stroke="#111" stroke-width="1"/><path d="M10.8,487.6h5" stroke="#111" stroke-width="1"/><rect x="6.3" y="485.4" width="4.4" height="4.4" fill="#fff" stroke="#111" stroke-width="1.1"/><circle cx="17.3" cy="488.2" r="1.3" fill="#fff" stroke="#111" stroke-width="1"/><path d="M22.8,465.8L29.8,472.6L25.6,478.4L19.6,473.4Z" fill="url(#gpenblue)" stroke="#3a5a78" stroke-width="0.7"/><path d="M21.4,475.4l3.6,2.6l-1.6,2.2l-3.4,-2.4z" fill="#f0b828"/><path d="M20.4,478.2l2.6,1.8L18.4,486.8z" fill="#444"/><path d="M6,498.2c4.4,0.2 7.6,2.6 7.8,7.4c0.2,4.6 -2,9 -1.4,12.6c0.6,2.6 3.2,3.2 6.6,2.4c3.4,-1 6.4,-2.6 9.8,-3.4c-3,2 -5.6,4.6 -10,5.4c-4.6,0.8 -9,-0.4 -9.8,-4.6c-0.8,-4.8 2.2,-8.6 1.6,-13.4c-0.4,-3 -2.2,-5.200 -4.600,-6.400z" fill="#000"/><path d="M21.8,499.6L28,503.6L24,512.6L17.200,519.2L15.6,512Z" fill="url(#gnib)" stroke="#222" stroke-width="1"/><path d="M21,498.8L22.800,497L29.6,499.6L28.6,503.8Z" fill="url(#gpenblue)" stroke="#2a4a68" stroke-width="0.7"/><path d="M22.6,501.6l5,2.600l-0.600,1.600l-5.200,-2.600z" fill="#d82020"/><path d="M20.200,507.200l-2.600,10.400" stroke="#222" stroke-width="1"/><circle cx="20.4" cy="507" r="1.200" fill="#222"/><path d="M17.5,556v7l4.500,-3.500z" fill="#8a8985" stroke="#6f6e6a" stroke-width="0.600"/><rect x="751" y="131" width="1" height="445" fill="#cfcdc9"/><rect x="752" y="131" width="1" height="445" fill="#fbfbfa"/><rect x="766.0" y="133.8" width="1" height="4.5" fill="#cfcdc9"/><rect x="769.3" y="133.8" width="1" height="4.5" fill="#cfcdc9"/><rect x="772.6" y="133.8" width="1" height="4.5" fill="#cfcdc9"/><rect x="755.5" y="143.5" width="27" height="27" rx="4.500" fill="url(#gpressed)" stroke="#a9a7a3" stroke-width="1"/><path d="M765.6,154l6.4,6.200" stroke="#000" stroke-width="1.300"/><path d="M774,162.200l-4.400,-1.200l3.200,-3.200z" fill="#000"/><path d="M763.9,149.5l2.7,2.7l-2.7,2.7l-2.7,-2.7z" fill="#c0c0f8" stroke="#0000ff" stroke-width="1.2"/><path d="M775.4,160.70000000000002l2.7,2.7l-2.7,2.7l-2.7,-2.7z" fill="#c8d8c8" stroke="#108010" stroke-width="1.2"/><rect x="760" y="177" width="18" height="1" fill="#d9d7d4"/><path d="M766,192.6H778M763.4,195V207" stroke="#111" stroke-width="1.300" stroke-dasharray="2 1.2" fill="none"/><path d="M763.4,190.1l2.5,2.5l-2.5,2.5l-2.5,-2.5z" fill="#8a8af0" stroke="#0000ff" stroke-width="1.2"/><path d="M775.600,221V235.600H761" stroke="#bdbbb7" stroke-width="1" stroke-dasharray="2 1.300" fill="none"/><path d="M774.600,251V265.300H760.800" stroke="#bdbbb7" stroke-width="1" stroke-dasharray="2 1.300" fill="none"/><path d="M774.6,263.1l2.2,2.2l-2.2,2.2l-2.2,-2.2z" fill="#dcdad7" stroke="#b0aeaa" stroke-width="0.9"/><path d="M773.800,280.700V294.400H760.800" stroke="#bdbbb7" stroke-width="1" stroke-dasharray="2 1.300" fill="none"/><ellipse cx="773.8" cy="285.4" rx="1.700" ry="2.500" fill="#c9c7c3" stroke="#b0aeaa" stroke-width="0.800"/><path d="M775,310.300V324.400H761" stroke="#bdbbb7" stroke-width="1" stroke-dasharray="2 1.300" fill="none"/><circle cx="764.5" cy="315.1" r="1.700" fill="#e4e2df" stroke="#b0aeaa" stroke-width="0.900"/><rect x="760" y="339.500" width="18" height="1" fill="#d9d7d4"/><rect x="745.8" y="351.0" width="5" height="1" fill="#c9c7c3"/><rect x="745.8" y="354.6" width="5" height="1" fill="#c9c7c3"/><rect x="745.8" y="358.2" width="5" height="1" fill="#c9c7c3"/><rect x="755.5" y="347.500" width="27" height="27" rx="4.500" fill="url(#gpressed)" stroke="#a9a7a3" stroke-width="1"/><path d="M761.800,362.200c1,-3 3.600,-4.800 7.600,-5.400c-3.600,5.400 0.400,11 8.800,12.800" fill="none" stroke="#444" stroke-width="1.100"/><path d="M770,354.09999999999997l2.3,2.3l-2.3,2.3l-2.3,-2.3z" fill="#8a8af0" stroke="#0000ff" stroke-width="1.2"/><path d="M761,383.800c6.400,0.600 10.600,3.400 10.800,8.200c0,2.400 -0.800,4 -2.800,5c3.600,0 7,-1.600 8.700,-5.500" fill="none" stroke="#0a7a0a" stroke-width="1.600"/><path d="M761,428.400L777.700,413M761,422.700L777.700,418.400" stroke="#c4c2be" stroke-width="1.100"/><circle cx="769" cy="420.300" r="1.800" fill="#cfcdc9" stroke="#b8b6b2" stroke-width="0.800"/><path d="M760.200,442.600c6.600,0.800 10.800,4.200 11.100,9.700c0.200,1.600 -0.400,2.600 -1.400,3.200c3,-0.400 5.800,-2.200 6.900,-5.200" fill="none" stroke="#444" stroke-width="1.100"/><path d="M768.3,454.0l2.3,2.3l-2.3,2.3l-2.3,-2.3z" fill="#a8b8e8" stroke="#108010" stroke-width="1.2"/><path d="M760.200,472.500c4,0 6.400,1 8.100,3.100c2.600,3.200 3.400,6.400 2,10.700c3,-0.600 5.600,-2.600 6.500,-5.700" fill="none" stroke="#444" stroke-width="1.100"/><rect x="766.300" y="473.600" width="4" height="4" fill="#a8b8e8" stroke="#108010" stroke-width="1.100"/><path d="M761.200,518L776.400,504" stroke="#333" stroke-width="1"/><path d="M763.600,520.500l1.600,-6.600M765.800,518.400l1.600,-6.600M771,513.400l1.600,-6.600M773.200,511.400l1.600,-6.600" stroke="#d01818" stroke-width="1.300"/><circle cx="768.300" cy="511" r="1.900" fill="#a8c8a8" stroke="#108010" stroke-width="1.100"/><path d="M768.400,556.200v6.800l4.600,-3.400z" fill="#8a8985" stroke="#6f6e6a" stroke-width="0.600"/></svg><div class="abs" style="left:1px;top:130px;width:784px;height:1px;background:#dad8d5;"></div>
<div class="abs" style="left:1px;top:131px;width:784px;height:1px;background:#f7f6f5;"></div>
<div id="canvas" class="abs" style="left:50px;top:147px;width:675px;height:409px;background:#fff;"></div>
<svg width="786" height="642" viewBox="0 0 786 642"><defs><clipPath id="cv"><rect x="50" y="147" width="675" height="409"/></clipPath><clipPath id="hr"><rect x="50" y="131" width="675" height="16"/></clipPath><clipPath id="vr"><rect x="36" y="147" width="14" height="409"/></clipPath></defs><path d="M62.5,144V147M75.5,133V147M88.5,144V147M100.5,141V147M113.5,144V147M126.5,141V147M138.5,144V147M151.5,141V147M164.5,144V147M177.5,141V147M189.5,144V147M202.5,133V147M215.5,144V147M227.5,141V147M240.5,144V147M253.5,141V147M265.5,144V147M278.5,141V147M291.5,144V147M304.5,141V147M316.5,144V147M329.5,133V147M342.5,144V147M354.5,141V147M367.5,144V147M380.5,141V147M392.5,144V147M405.5,141V147M418.5,144V147M431.5,141V147M443.5,144V147M456.5,133V147M469.5,144V147M481.5,141V147M494.5,144V147M507.5,141V147M519.5,144V147M532.5,141V147M545.5,144V147M558.5,141V147M570.5,144V147M583.5,133V147M596.5,144V147M608.5,141V147M621.5,144V147M634.5,141V147M646.5,144V147M659.5,141V147M672.5,144V147M685.5,141V147M697.5,144V147M710.5,133V147M723.5,144V147" stroke="#2e2e2e" stroke-width="1" fill="none" clip-path="url(#hr)"/><text x="77.6" y="138.9" font-size="9.5" fill="#4f5a70" font-weight="normal">-1000</text><text x="204.6" y="138.9" font-size="9.5" fill="#4f5a70" font-weight="normal">0</text><text x="331.6" y="138.9" font-size="9.5" fill="#4f5a70" font-weight="normal">1000</text><text x="458.6" y="138.9" font-size="9.5" fill="#4f5a70" font-weight="normal">2k</text><text x="585.6" y="138.9" font-size="9.5" fill="#4f5a70" font-weight="normal">3k</text><text x="712.6" y="138.9" font-size="9.5" fill="#4f5a70" font-weight="normal">4k</text><path d="M37.5,157.5H50M48,170.5H50M45,182.5H50M48,195.5H50M45,208.5H50M48,220.5H50M45,233.5H50M48,246.5H50M45,259.5H50M48,271.5H50M37.5,284.5H50M48,297.5H50M45,309.5H50M48,322.5H50M45,335.5H50M48,347.5H50M45,360.5H50M48,373.5H50M45,386.5H50M48,398.5H50M37.5,411.5H50M48,424.5H50M45,436.5H50M48,449.5H50M45,462.5H50M48,474.5H50M45,487.5H50M48,500.5H50M45,513.5H50M48,525.5H50M37.5,538.5H50M48,551.5H50" stroke="#2e2e2e" stroke-width="1" fill="none"/><g clip-path="url(#vr)"><text x="37.9" y="165.8" font-size="9.5" fill="#4f5a70" font-weight="normal">0</text><rect x="38.5" y="289.9" width="2" height="1" fill="#4f5a70"/><text x="37.9" y="300.3" font-size="9.5" fill="#4f5a70" font-weight="normal">1</text><text x="37.9" y="308.3" font-size="9.5" fill="#4f5a70" font-weight="normal">0</text><text x="37.9" y="316.3" font-size="9.5" fill="#4f5a70" font-weight="normal">0</text><text x="37.9" y="324.3" font-size="9.5" fill="#4f5a70" font-weight="normal">0</text><rect x="38.5" y="417.1" width="2" height="1" fill="#4f5a70"/><text x="37.9" y="427.5" font-size="9.5" fill="#4f5a70" font-weight="normal">2</text><text x="37.9" y="435.5" font-size="9.5" fill="#4f5a70" font-weight="normal">k</text><rect x="38.5" y="544.3" width="2" height="1" fill="#4f5a70"/><text x="37.9" y="554.7" font-size="9.5" fill="#4f5a70" font-weight="normal">3</text><text x="37.9" y="562.7" font-size="9.5" fill="#4f5a70" font-weight="normal">k</text></g><path d="M492,141.200h9l-4.500,4.800z" fill="#3a3a3a"/><path d="M45,496.700v9l5,-4.500z" fill="#3a3a3a"/><g clip-path="url(#cv)"><path d="M185.8,183.3 192.1,178 199.3,173 207.3,168.6 214.7,165.3 222.7,162.5 231,160.3 238.8,162.3 233.4,165.9 229.7,168.6 224.8,172.7 220.3,177 217.4,180.1 213.6,184.7 210.4,189.2 207.5,193.9 205.2,198.7 203.5,203.6 202.3,208.4 201.5,213.6 201.6,214.9 202,216.1 202.6,217.3 203.4,218.2 204.4,219.1 205.5,219.7 207.4,220.1 209.3,220 210.5,219.7 212.1,218.7 213.4,217.3 214,216.1 214.4,214.9 214.4,211.8 215.4,207.3 216.7,203.7 218.5,199.9 220.8,196.1 223.5,192.2 226.7,188.4 231,184 234.9,188 238.2,191.9 241.1,195.8 243.7,200.3 245.5,204.1 246.7,207.7 247.6,212.1 247.6,214.9 248,216.1 248.6,217.3 249.4,218.2 250.4,219.1 252.1,219.9 253.4,220.1 255.3,220 257.1,219.4 258.1,218.7 259.4,217.3 260,216.1 260.4,214.9 260.4,211.8 261.4,207.3 262.7,203.7 264.5,199.9 266.8,196.1 269.5,192.2 272.7,188.4 277,184 281.3,188.4 284.5,192.2 287.2,196.1 289.5,199.9 291.3,203.7 292.6,207.3 293.6,211.8 293.6,214.9 294,216.1 294.6,217.3 295.4,218.2 296.4,219.1 298.1,219.9 299.4,220.1 301.3,220 303.1,219.4 304.1,218.7 305.4,217.3 306,216.1 306.4,214.9 306.4,211.8 307.4,207.3 308.7,203.7 310.5,199.9 312.8,196.1 315.5,192.2 318.7,188.4 323,184 326.1,187.1 329.5,190.9 331.4,193.5 334,197.4 336.8,202.4 338.6,207.3 339.4,210.7 339.6,212.3 339.5,214.3 340,216.1 341,217.8 341.9,218.7 342.9,219.4 344.7,220 346.6,220.1 348.5,219.7 350.1,218.7 351.4,217.3 352,216.1 352.4,214.9 352.4,211.8 353.4,207.3 354.7,203.7 356.5,199.9 358.8,196.1 361.5,192.2 364.7,188.4 369,184 372.1,187.1 375.5,190.9 378.4,194.8 380.8,198.7 382.8,202.4 384.6,207.3 385.4,210.7 385.6,212.3 385.5,214.3 386,216.1 387,217.8 387.9,218.7 388.9,219.4 390.1,219.9 392,220.1 393.9,219.9 395.1,219.4 396.1,218.7 397.4,217.3 398,216.1 398.4,214.9 398.4,211.8 399.4,207.3 400.7,203.7 402.5,199.9 404.8,196.1 407.5,192.2 410.7,188.4 415,184 419.3,188.4 422.5,192.2 425.2,196.1 427.5,199.9 429.3,203.7 430.6,207.3 431.6,211.8 431.6,214.9 432,216.1 432.6,217.3 433.4,218.2 434.4,219.1 436.1,219.9 437.4,220.1 438.6,220.1 439.9,219.9 441.1,219.4 442.1,218.7 443,217.8 444,216.1 444.5,214.3 444.4,212.3 444.6,210.7 445.4,207.3 447.2,202.4 449.2,198.7 451.6,194.8 454.5,190.9 457.9,187.1 461,184 465.3,188.4 468.5,192.2 471.2,196.1 473.5,199.9 475.3,203.7 476.6,207.3 477.6,211.8 477.6,214.9 478,216.1 478.6,217.3 479.9,218.7 481.5,219.7 483.4,220.1 485.3,220 487.1,219.4 488.1,218.7 489,217.8 490,216.1 490.5,214.3 490.4,212.3 490.6,210.7 491.4,207.3 493.2,202.4 496,197.4 498.6,193.5 500.5,190.9 503.9,187.1 507,184 511.3,188.4 514.5,192.2 517.2,196.1 519.5,199.9 521.3,203.7 522.6,207.3 523.6,211.8 523.6,214.9 524,216.1 524.6,217.3 525.9,218.7 527.5,219.7 529.4,220.1 530.6,220.1 531.9,219.9 533.1,219.4 534.6,218.2 535.4,217.3 536,216.1 536.4,214.9 536.4,212.1 537.3,207.7 538.5,204.1 540.3,200.3 542.9,195.8 545.8,191.9 549.1,188 553,184 557.3,188.4 560.5,192.2 563.2,196.1 565.5,199.9 567.3,203.7 568.6,207.3 569.6,211.8 569.6,214.9 570,216.1 570.6,217.3 571.9,218.7 572.9,219.4 574.1,219.9 576,220.1 577.3,220 578.5,219.7 579.6,219.1 580.6,218.2 581.4,217.3 582,216.1 582.4,214.9 582.5,213.6 581.7,208.4 580.5,203.6 578.9,198.9 576.6,194.1 574.6,190.8 571.5,186.1 567.8,181.5 563.7,177 559.2,172.7 554.3,168.6 550.6,165.9 545.2,162.3 553,160.3 562.7,162.9 568,164.8 573.1,166.9 581.4,171.1 588.9,175.8 592.9,178.7 597.4,182.5 601,186 601.8,187.1 602.7,188 603.7,188.7 604.9,189.2 606.2,189.4 607.4,189.4 609.3,189 610.4,188.4 611.8,187.1 612.5,186 613,184.9 613.3,183 613,181.1 612.5,179.9 611.8,178.9 605.7,173.2 601.6,169.7 596.1,165.6 591.3,162.4 586.2,159.4 580,156.3 581.4,154.6 582.1,153.1 582.2,151.5 582,149.9 581.4,148.4 579.7,146.6 578.3,145.8 576.7,145.4 570.4,145.5 564.9,145.8 559.4,146.5 553,147.5 547.3,146.6 540.5,145.8 533.6,145.4 527.1,145.4 521.7,145.6 516.2,146.1 507,147.5 500.6,146.5 495.1,145.8 486.9,145.4 481.2,145.4 475.7,145.6 470.2,146.1 461,147.5 454.6,146.5 449.1,145.8 440.9,145.4 435.2,145.4 429.7,145.6 424.2,146.1 415,147.5 408.6,146.5 403.2,145.8 397.6,145.5 391.9,145.3 386.3,145.5 380.8,145.8 375.4,146.5 369,147.5 362.6,146.5 357.2,145.8 351.6,145.5 345.9,145.3 340.3,145.5 334.8,145.8 329.4,146.5 323,147.5 316.6,146.5 311.2,145.8 305.6,145.5 299.9,145.3 294.3,145.5 288.8,145.8 283.4,146.5 277,147.5 270.6,146.5 265.2,145.8 259.6,145.5 254,145.3 248.6,145.4 241.8,145.9 236.6,146.6 231,147.5 224.6,146.5 219.2,145.8 213.7,145.5 208.1,145.3 206.5,145.5 204.3,146.6 203.1,147.7 202.3,149.1 201.8,151.5 201.9,153.1 202.6,154.6 204,156.3 197.8,159.4 192.7,162.4 187.9,165.6 182.4,169.7 178.3,173.2 172.2,178.9 171.5,179.9 171,181.1 170.7,183 170.8,184.2 171.2,185.5 171.8,186.6 172.6,187.6 173.6,188.4 174.7,189 175.9,189.4 177.2,189.5 179.1,189.2 180.8,188.4 181.8,187.6 183,186ZM346,193.1 343.6,189.2 340.3,184.5 336.6,180.1 332.8,176 339.3,171.8 346,168.3 352.7,171.8 359.2,176 355.4,180.1 351.7,184.5 348.4,189.2ZM392,193.1 389.6,189.2 386.3,184.5 382.6,180.1 378.8,176 385.3,171.8 392,168.3 398.7,171.8 405.2,176 401.4,180.1 397.7,184.5 394.4,189.2ZM369,167.7 361.2,162.3 369,160.3 376.8,162.3ZM438,193.1 435.6,189.2 432.3,184.5 428.6,180.1 424.8,176 431.3,171.8 438,168.3 444.7,171.8 451.2,176 447.4,180.1 443.7,184.5 440.4,189.2ZM415,167.7 407.2,162.3 415,160.3 422.8,162.3ZM243.9,173.9 249.1,170.8 254,168.3 260.7,171.8 267.2,176 263.4,180.1 259.7,184.5 256.4,189.2 254,193.1 251.5,188.9 248.1,184.2 244.7,180.2 240.8,176ZM300,193.1 296.6,187.6 293.2,183.1 290.5,180 286.8,176 293.3,171.8 300,168.3 306.7,171.8 313.2,176 309.4,180.1 305.7,184.5 302.4,189.2ZM277,167.7 269.2,162.3 277,160.3 284.8,162.3ZM323,167.7 315.2,162.3 323,160.3 330.8,162.3ZM484,193.1 480.7,187.8 478.3,184.5 474.6,180.1 470.8,176 477.3,171.8 484,168.3 490.7,171.8 497.2,176 493.4,180.1 489.7,184.5 486.4,189.2ZM530,193.1 526.7,187.8 524.3,184.5 520.6,180.1 516.8,176 523.3,171.8 530,168.3 536.7,171.8 543.2,176 539.3,180.2 535.9,184.2 532.5,188.9ZM507,167.7 499.2,162.3 507,160.3 514.8,162.3ZM461,167.7 453.2,162.3 461,160.3 468.8,162.3Z" fill="#b3b3b3" fill-rule="evenodd" stroke="#1c1c1c" stroke-width="1.05" stroke-linejoin="round"/><path d="M185.8,323.3 192.1,318 199.3,313 207.3,308.6 214.7,305.3 222.7,302.5 231,300.3 238.8,302.3 233.4,305.9 229.7,308.6 224.8,312.7 220.3,317 217.4,320.1 213.6,324.7 210.4,329.2 207.5,333.9 205.2,338.7 203.5,343.6 202.3,348.4 201.5,353.6 201.8,355.5 202.3,356.7 203,357.8 203.9,358.7 204.9,359.4 206.1,359.9 207.4,360.1 208.6,360.1 210.5,359.7 212.1,358.7 213.4,357.3 214,356.1 214.4,354.9 214.4,351.8 215.4,347.3 216.7,343.7 218.5,339.9 220.8,336.1 223.5,332.2 226.7,328.4 231,324 234.9,328 238.2,331.9 241.1,335.8 243.7,340.3 245.5,344.1 246.7,347.7 247.6,352.1 247.6,354.9 248,356.1 248.6,357.3 249.4,358.2 250.4,359.1 251.5,359.7 253.4,360.1 254.6,360.1 256.5,359.7 258.1,358.7 259.4,357.3 260,356.1 260.4,354.9 260.4,351.8 261.4,347.3 262.7,343.7 264.5,339.9 266.8,336.1 269.5,332.2 272.7,328.4 277,324 281.3,328.4 284.5,332.2 287.2,336.1 289.5,339.9 291.3,343.7 292.6,347.3 293.6,351.8 293.6,354.9 294,356.1 294.6,357.3 295.4,358.2 296.4,359.1 297.5,359.7 299.4,360.1 300.6,360.1 302.5,359.7 304.1,358.7 305.4,357.3 306,356.1 306.4,354.9 306.4,351.8 307.4,347.3 308.7,343.7 310.5,339.9 312.8,336.1 315.5,332.2 318.7,328.4 323,324 326.1,327.1 329.5,330.9 331.4,333.5 334,337.4 336.8,342.4 338.6,347.3 339.4,350.7 339.6,352.3 339.5,354.3 340,356.1 341,357.8 341.9,358.7 343.5,359.7 344.7,360 346.6,360.1 348.5,359.7 350.1,358.7 351.4,357.3 352,356.1 352.4,354.9 352.4,351.8 353.4,347.3 354.7,343.7 356.5,339.9 358.8,336.1 361.5,332.2 364.7,328.4 369,324 372.1,327.1 375.5,330.9 378.4,334.8 380.8,338.7 382.8,342.4 384.6,347.3 385.4,350.7 385.6,352.3 385.5,354.3 386,356.1 387,357.8 387.9,358.7 388.9,359.4 390.1,359.9 392,360.1 393.9,359.9 395.1,359.4 396.1,358.7 397.4,357.3 398,356.1 398.4,354.9 398.4,351.8 399.4,347.3 400.7,343.7 402.5,339.9 404.8,336.1 407.5,332.2 410.7,328.4 415,324 419.3,328.4 422.5,332.2 425.2,336.1 427.5,339.9 429.3,343.7 430.6,347.3 431.6,351.8 431.6,354.9 432,356.1 432.6,357.3 433.9,358.7 434.9,359.4 436.1,359.9 437.4,360.1 438.6,360.1 439.9,359.9 441.1,359.4 442.1,358.7 443,357.8 444,356.1 444.5,354.3 444.4,352.3 444.6,350.7 445.4,347.3 447.2,342.4 449.2,338.7 451.6,334.8 454.5,330.9 457.9,327.1 461,324 465.3,328.4 468.5,332.2 471.2,336.1 473.5,339.9 475.3,343.7 476.6,347.3 477.6,351.8 477.6,354.9 478,356.1 478.6,357.3 479.9,358.7 481.5,359.7 483.4,360.1 485.3,360 486.5,359.7 488.1,358.7 489,357.8 490,356.1 490.5,354.3 490.4,352.3 490.6,350.7 491.4,347.3 493.2,342.4 496,337.4 498.6,333.5 500.5,330.9 503.9,327.1 507,324 511.3,328.4 514.5,332.2 517.2,336.1 519.5,339.9 521.3,343.7 522.6,347.3 523.6,351.8 523.6,354.9 524,356.1 524.6,357.3 525.9,358.7 527.5,359.7 529.4,360.1 530.6,360.1 531.9,359.9 533.1,359.4 534.1,358.7 535.4,357.3 536,356.1 536.4,354.9 536.4,352.1 537.3,347.7 538.5,344.1 540.3,340.3 542.9,335.8 545.8,331.9 549.1,328 553,324 557.3,328.4 560.5,332.2 563.2,336.1 565.5,339.9 567.3,343.7 568.6,347.3 569.6,351.8 569.6,354.9 570,356.1 570.6,357.3 571.9,358.7 572.9,359.4 574.1,359.9 576,360.1 577.3,360 578.5,359.7 579.6,359.1 580.6,358.2 581.4,357.3 582,356.1 582.4,354.9 582.5,353.6 581.7,348.4 580.5,343.6 578.9,338.9 576.6,334.1 574.6,330.8 571.5,326.1 567.8,321.5 563.7,317 559.2,312.7 554.3,308.6 550.6,305.9 545.2,302.3 553,300.3 562.7,302.9 568,304.8 573.1,306.9 581.4,311.1 588.9,315.8 592.9,318.7 597.4,322.5 601,326 601.8,327.1 602.7,328 603.7,328.7 604.9,329.2 606.2,329.4 608.1,329.4 609.3,329 610.9,328 612.2,326.6 612.8,325.5 613.2,324.2 613.3,323 613,321.1 612.5,319.9 611.8,318.9 605.7,313.2 601.6,309.7 596.1,305.6 591.3,302.4 586.2,299.4 580,296.3 581.4,294.6 582.1,293.1 582.2,291.5 582,289.9 581.4,288.4 580.4,287.1 579.1,286.1 576.7,285.4 570.4,285.5 564.9,285.8 559.4,286.5 553,287.5 547.3,286.6 540.5,285.8 533.6,285.4 527.1,285.4 521.7,285.6 516.2,286.1 507,287.5 500.6,286.5 495.1,285.8 486.9,285.4 481.2,285.4 475.7,285.6 470.2,286.1 461,287.5 454.6,286.5 449.1,285.8 440.9,285.4 435.2,285.4 429.7,285.6 424.2,286.1 415,287.5 408.6,286.5 403.2,285.8 397.6,285.5 391.9,285.3 386.3,285.5 380.8,285.8 375.4,286.5 369,287.5 362.6,286.5 357.2,285.8 351.6,285.5 345.9,285.3 340.3,285.5 334.8,285.8 329.4,286.5 323,287.5 316.6,286.5 311.2,285.8 305.6,285.5 299.9,285.3 294.3,285.5 288.8,285.8 283.4,286.5 277,287.5 270.6,286.5 265.2,285.8 259.6,285.5 254,285.3 248.6,285.4 241.8,285.9 236.6,286.6 231,287.5 224.6,286.5 219.2,285.8 213.7,285.5 208.1,285.3 206.5,285.5 204.9,286.1 203.6,287.1 202.3,289.1 201.8,291.5 201.9,293.1 202.6,294.6 204,296.3 197.8,299.4 192.7,302.4 187.9,305.6 182.4,309.7 178.3,313.2 172.2,318.9 171.5,319.9 171,321.1 170.7,323 170.8,324.2 171.2,325.5 171.8,326.6 172.6,327.6 173.6,328.4 174.7,329 175.9,329.4 177.2,329.5 179.1,329.2 180.8,328.4 181.8,327.6 183,326Z" fill="#b3b3b3" stroke="#1c1c1c" stroke-width="1.05" stroke-linejoin="round"/><path d="M186.3,428.2 192.6,422.9 199.8,417.9 207.8,413.5 215.2,410.2 223.2,407.4 231.5,405.2 239.3,407.2 233.9,410.8 230.2,413.5 225.3,417.6 220.8,421.9 217.9,425 214.1,429.6 210.9,434.1 208,438.8 205.7,443.6 204,448.5 202.8,453.3 202,458.5 202.3,460.4 202.8,461.6 203.5,462.7 204.4,463.6 205.4,464.3 206.6,464.8 207.9,465 209.1,465 211,464.6 212.6,463.6 213.9,462.2 214.5,461 214.9,459.8 214.9,456.7 215.9,452.2 217.2,448.6 219,444.8 221.3,441 224,437.1 227.2,433.3 231.5,428.9 235.4,432.9 238.7,436.8 241.6,440.7 244.2,445.2 246,449 247.2,452.6 248.1,457 248.1,459.8 248.5,461 249.1,462.2 249.9,463.1 250.9,464 252,464.6 253.9,465 255.1,465 257,464.6 258.6,463.6 259.9,462.2 260.5,461 260.9,459.8 260.9,456.7 261.9,452.2 263.2,448.6 265,444.8 267.3,441 270,437.1 273.2,433.3 277.5,428.9 281.8,433.3 285,437.1 287.7,441 290,444.8 291.8,448.6 293.1,452.2 294.1,456.7 294.1,459.8 294.5,461 295.1,462.2 295.9,463.1 296.9,464 298,464.6 299.9,465 301.1,465 303,464.6 304.6,463.6 305.9,462.2 306.5,461 306.9,459.8 306.9,456.7 307.9,452.2 309.2,448.6 311,444.8 313.3,441 316,437.1 319.2,433.3 323.5,428.9 326.6,432 330,435.8 331.9,438.4 334.5,442.3 337.3,447.3 339.1,452.2 339.9,455.6 340.1,457.2 340,459.2 340.5,461 341.5,462.7 342.4,463.6 344,464.6 345.2,464.9 347.1,465 349,464.6 350.6,463.6 351.9,462.2 352.5,461 352.9,459.8 352.9,456.7 353.9,452.2 355.2,448.6 357,444.8 359.3,441 362,437.1 365.2,433.3 369.5,428.9 372.6,432 376,435.8 378.9,439.7 381.3,443.6 383.3,447.3 385.1,452.2 385.9,455.6 386.1,457.2 386,459.2 386.5,461 387.5,462.7 388.4,463.6 389.4,464.3 390.6,464.8 392.5,465 394.4,464.8 395.6,464.3 396.6,463.6 397.9,462.2 398.5,461 398.9,459.8 398.9,456.7 399.9,452.2 401.2,448.6 403,444.8 405.3,441 408,437.1 411.2,433.3 415.5,428.9 419.8,433.3 423,437.1 425.7,441 428,444.8 429.8,448.6 431.1,452.2 432.1,456.7 432.1,459.8 432.5,461 433.1,462.2 434.4,463.6 435.4,464.3 436.6,464.8 437.9,465 439.1,465 440.4,464.8 441.6,464.3 442.6,463.6 443.5,462.7 444.5,461 445,459.2 444.9,457.2 445.1,455.6 445.9,452.2 447.7,447.3 449.7,443.6 452.1,439.7 455,435.8 458.4,432 461.5,428.9 465.8,433.3 469,437.1 471.7,441 474,444.8 475.8,448.6 477.1,452.2 478.1,456.7 478.1,459.8 478.5,461 479.1,462.2 480.4,463.6 482,464.6 483.9,465 485.8,464.9 487,464.6 488.6,463.6 489.5,462.7 490.5,461 491,459.2 490.9,457.2 491.1,455.6 491.9,452.2 493.7,447.3 496.5,442.3 499.1,438.4 501,435.8 504.4,432 507.5,428.9 511.8,433.3 515,437.1 517.7,441 520,444.8 521.8,448.6 523.1,452.2 524.1,456.7 524.1,459.8 524.5,461 525.1,462.2 526.4,463.6 528,464.6 529.9,465 531.1,465 532.4,464.8 533.6,464.3 534.6,463.6 535.9,462.2 536.5,461 536.9,459.8 536.9,457 537.8,452.6 539,449 540.8,445.2 543.4,440.7 546.3,436.8 549.6,432.9 553.5,428.9 557.8,433.3 561,437.1 563.7,441 566,444.8 567.8,448.6 569.1,452.2 570.1,456.7 570.1,459.8 570.5,461 571.1,462.2 572.4,463.6 573.4,464.3 574.6,464.8 576.5,465 577.8,464.9 579,464.6 580.1,464 581.1,463.1 581.9,462.2 582.5,461 582.9,459.8 583,458.5 582.2,453.3 581,448.5 579.4,443.8 577.1,439 575.1,435.7 572,431 568.3,426.4 564.2,421.9 559.7,417.6 554.8,413.5 551.1,410.8 545.7,407.2 553.5,405.2 563.2,407.8 568.5,409.7 573.6,411.8 581.9,416 589.4,420.7 593.4,423.6 597.9,427.4 601.5,430.9 602.3,432 603.2,432.9 604.2,433.6 605.4,434.1 606.7,434.3 608.6,434.3 609.8,433.9 611.4,432.9 612.7,431.5 613.3,430.4 613.7,429.1 613.8,427.9 613.5,426 613,424.8 612.3,423.8 606.2,418.1 602.1,414.6 596.6,410.5 591.8,407.3 586.7,404.3 580.5,401.2 581.9,399.5 582.6,398 582.7,396.4 582.5,394.8 581.9,393.3 580.9,392 579.6,391 577.2,390.3 570.9,390.4 565.4,390.7 559.9,391.4 553.5,392.4 547.8,391.5 541,390.7 534.1,390.3 527.6,390.3 522.2,390.5 516.7,391 507.5,392.4 501.1,391.4 495.6,390.7 487.4,390.3 481.7,390.3 476.2,390.5 470.7,391 461.5,392.4 455.1,391.4 449.6,390.7 441.4,390.3 435.7,390.3 430.2,390.5 424.7,391 415.5,392.4 409.1,391.4 403.7,390.7 398.1,390.4 392.4,390.2 386.8,390.4 381.3,390.7 375.9,391.4 369.5,392.4 363.1,391.4 357.7,390.7 352.1,390.4 346.4,390.2 340.8,390.4 335.3,390.7 329.9,391.4 323.5,392.4 317.1,391.4 311.7,390.7 306.1,390.4 300.4,390.2 294.8,390.4 289.3,390.7 283.9,391.4 277.5,392.4 271.1,391.4 265.7,390.7 260.1,390.4 254.5,390.2 249.1,390.3 242.3,390.8 237.1,391.5 231.5,392.4 225.1,391.4 219.7,390.7 214.2,390.4 208.6,390.2 207,390.4 205.4,391 204.1,392 202.8,394 202.3,396.4 202.4,398 203.1,399.5 204.5,401.2 198.3,404.3 193.2,407.3 188.4,410.5 182.9,414.6 178.8,418.1 172.7,423.8 172,424.8 171.5,426 171.2,427.9 171.3,429.1 171.7,430.4 172.3,431.5 173.1,432.5 174.1,433.3 175.2,433.9 176.4,434.3 177.7,434.4 179.6,434.1 181.3,433.3 182.3,432.5 183.5,430.9Z" fill="#b3b3b3" stroke="none"/><marker id="nd" markerWidth="12" markerHeight="12" refX="6" refY="6" markerUnits="userSpaceOnUse" overflow="visible"><path d="M6,2L10,6L6,10L2,6Z" fill="#c0c0c0" stroke="#1c1c1c" stroke-width="0.950" shape-rendering="crispEdges"/></marker><marker id="ns" markerWidth="8" markerHeight="8" refX="4" refY="4" markerUnits="userSpaceOnUse" orient="auto" overflow="visible"><path d="M1.400,1.400h5.200v5.200h-5.200z" fill="#bdbdbd" stroke="#161616" stroke-width="0.950" shape-rendering="crispEdges"/></marker><path d="M210.0,390.2 212.6,390.3 215.2,390.4 217.8,390.6 220.4,390.8 222.9,391.1 225.5,391.4 228.1,391.8 230.7,392.3 233.2,392.1 235.8,391.7 238.7,391.3 241.7,390.9 244.7,390.6 247.7,390.4 250.6,390.3 253.6,390.2 256.6,390.3 259.6,390.3 262.6,390.5 265.6,390.7 268.6,391.0 271.5,391.4 274.5,391.9 277.4,392.4 280.0,392.0 282.5,391.6 285.1,391.2 287.7,390.9 290.3,390.7 292.9,390.5 295.5,390.3 298.1,390.3 300.7,390.2 303.3,390.3 305.9,390.3 308.5,390.5 311.1,390.7 313.6,390.9 316.2,391.3 318.8,391.6 321.4,392.0 323.9,392.4 326.5,391.9 329.1,391.5 331.6,391.1 334.2,390.9 336.8,390.6 339.4,390.4 342.0,390.3 344.6,390.3 347.2,390.2 349.8,390.3 352.1,390.4 354.5,390.5 356.8,390.7 359.1,390.9 361.5,391.2 363.8,391.5 366.1,391.8 368.4,392.2 370.7,392.2 373.0,391.8 375.3,391.5 377.6,391.1 379.9,390.9 382.3,390.7 384.6,390.5 386.9,390.4 389.3,390.3 391.6,390.2 394.0,390.2 396.3,390.3 398.6,390.4 401.0,390.5 403.3,390.7 405.6,390.9 408.0,391.2 410.3,391.5 412.6,391.9 414.9,392.3 419.8,391.7 424.7,391.0 429.6,390.6 434.5,390.3 439.4,390.2 444.4,390.4 449.3,390.7 454.2,391.3 459.1,392.0 464.0,392.0 468.8,391.2 473.8,390.7 478.7,390.4 483.6,390.2 487.3,390.3 490.9,390.4 494.5,390.6 498.2,391.0 501.8,391.5 505.4,392.0 508.9,392.2 512.5,391.6 516.1,391.1 519.8,390.7 523.4,390.4 527.0,390.3 530.7,390.2 534.3,390.3 536.5,390.4 538.7,390.5 540.9,390.7 543.1,390.9 545.3,391.1 547.5,391.4 549.7,391.8 551.9,392.1 554.0,392.3 556.2,391.9 558.4,391.6 560.6,391.3 562.8,391.0 565.0,390.8 567.6,390.6 570.2,390.4 572.8,390.3 575.4,390.2 577.9,390.4" fill="none" stroke="none" marker-start="url(#nd)" marker-mid="url(#nd)" marker-end="url(#nd)"/><path d="M551.6,430.8 549.5,433.0 547.5,435.2 545.7,437.6 543.9,440.0 542.3,442.5 540.8,445.1 539.5,447.8 538.4,450.6 537.6,453.4 537.0,456.4 536.9,459.3 535.5,462.6 532.6,464.7 529.0,464.9 525.9,463.1 524.2,460.0 524.0,456.3 523.3,452.8 522.1,449.3 520.6,446.0 518.9,442.8 516.9,439.8 514.7,436.8 512.4,434.0 510.0,431.3 508.4,429.8 506.8,429.6 505.2,431.1 503.7,432.7 502.3,434.4 500.9,436.1 499.5,437.8 498.2,439.6 497.0,441.5 495.8,443.4 494.8,445.3 493.8,447.3 492.9,449.3 492.2,451.4" fill="none" stroke="none" marker-start="url(#nd)" marker-mid="url(#nd)" marker-end="url(#nd)"/><path d="M285.4,437.7 284.1,436.0 282.6,434.3 281.2,432.6 279.7,431.0 278.1,429.5 276.5,429.9 274.9,431.4 273.4,433.1 272.0,434.7 270.6,436.4 269.2,438.2 268.0,440.0 266.7,441.8 265.6,443.7 264.6,445.7 263.6,447.7 262.8,449.7 262.0,451.8 261.4,453.9 261.0,456.1 261.0,458.4 260.6,460.7 259.5,462.7 257.7,464.2 255.5,465.0 253.2,464.9 251.0,464.0 249.3,462.4 248.3,460.4 248.0,458.0 247.9,455.7 247.4,453.4 246.8,451.2 246.0,449.0 244.7,446.3 243.3,443.6 241.8,441.1 240.1,438.6 238.3,436.2 236.4,433.9 234.3,431.7 232.2,429.6" fill="none" stroke="none" marker-start="url(#nd)" marker-mid="url(#nd)" marker-end="url(#nd)"/><path d="M202.3,395.6 203.0,393.6 204.2,392.0 205.9,390.8 207.9,390.3" fill="none" stroke="none" marker-start="url(#ns)" marker-mid="url(#ns)" marker-end="url(#ns)"/><path d="M580.7,391.8 582.5,394.7 582.5,398.1 580.8,401.0 583.3,402.6 586.3,404.1 589.3,405.8 592.2,407.6 595.1,409.4 597.9,411.4 599.3,412.5 600.8,413.6 602.2,414.7 603.6,415.8 605.0,417.0 606.3,418.2 607.6,419.4 608.9,420.6 610.2,421.9 611.6,423.0 612.8,424.4 613.5,426.0 613.8,427.8 613.6,429.6 611.9,432.5 608.9,434.2 605.5,434.1 602.6,432.4 600.4,429.8 597.9,427.5 595.4,425.2 592.7,423.1 589.9,421.1 587.1,419.2 584.2,417.3 581.2,415.6 578.2,414.0 575.2,412.5 573.7,411.8 572.2,411.2 570.7,410.6 569.2,410.0 567.7,409.4 566.2,408.8 564.6,408.3 563.1,407.8 561.6,407.3 560.0,406.8 558.4,406.4 556.9,406.0 555.3,405.6 553.7,405.2 551.3,405.7 548.8,406.3 546.4,407.0 547.1,408.2 549.2,409.5 551.3,411.0 553.3,412.5 555.3,414.0 557.3,415.6 559.2,417.2 561.1,418.9 562.9,420.6 564.7,422.4 566.4,424.2 567.5,425.4 568.5,426.5 569.4,427.7 570.4,428.9 571.3,430.1 572.2,431.3 573.1,432.6 574.0,433.9 574.8,435.1 575.6,436.5 576.4,437.8 577.1,439.1 577.8,440.5 578.5,441.9 579.1,443.3 579.8,444.8 580.3,446.4 580.8,447.9 581.3,449.4 581.7,451.0 582.1,452.6 582.3,454.2 582.6,455.8 582.9,457.4 583.0,459.0 582.7,460.6 582.0,462.0 581.0,463.3 579.7,464.2 578.3,464.8 576.8,465.0 575.3,464.9 573.8,464.5 572.5,463.7 571.4,462.6 570.6,461.3 570.1,459.9 570.0,458.4 570.1,456.9 569.9,455.3 569.5,453.8 569.1,452.4 568.6,450.7 568.0,449.0 567.2,447.3 566.5,445.7 565.6,444.1 564.7,442.6 563.7,441.0 562.7,439.5 561.7,438.1 560.6,436.7 559.5,435.3 558.3,433.9 557.1,432.5 555.9,431.2 554.6,430.0 553.3,429.1" fill="none" stroke="none" marker-start="url(#ns)" marker-mid="url(#ns)" marker-end="url(#ns)"/><path d="M231.7,429.1 230.6,429.8 229.5,430.9 228.4,432.0 227.3,433.2 226.2,434.4 225.2,435.7 224.2,436.9 223.2,438.2 222.3,439.5 221.4,440.9 220.5,442.3 219.7,443.6 218.9,445.1 218.1,446.5 217.5,448.0 216.8,449.5 216.1,451.4 215.6,453.4 215.1,455.4 214.9,457.5 214.9,459.5 214.3,461.5 213.1,463.2 211.4,464.4 209.4,465.0 207.4,464.9 205.4,464.3 203.8,463.0 202.6,461.3 202.1,459.3 202.1,457.3 202.5,455.2 202.8,453.2 203.2,451.2 203.8,449.2 204.4,447.2 205.1,445.2 205.9,443.3 206.7,441.4 207.6,439.6 208.6,437.8 209.7,436.0 210.8,434.2 211.9,432.5 213.0,431.0 214.0,429.6 215.2,428.2 216.3,426.8 217.5,425.4 218.7,424.1 219.9,422.8 221.2,421.5 222.5,420.2 223.8,419.0 225.1,417.8 226.5,416.6 227.8,415.5 229.2,414.3 230.5,413.3 231.8,412.4 233.1,411.4 234.4,410.5 235.8,409.5 237.1,408.6 238.5,407.8 238.8,407.1 237.2,406.6 235.7,406.2 234.1,405.8 232.5,405.4 230.9,405.3 229.3,405.7 227.8,406.1 226.2,406.5 224.6,406.9 223.1,407.4 221.6,407.9 220.0,408.4 218.5,408.9 217.0,409.5 215.5,410.1 214.0,410.7 212.5,411.3 211.0,412.0 209.5,412.7 208.1,413.4 206.7,414.1 205.3,414.8 204.0,415.5 202.7,416.2 201.3,417.0 200.0,417.8 198.7,418.6 197.4,419.4 196.2,420.3 194.9,421.2 193.7,422.1 192.5,423.0 191.2,423.9 190.1,424.9 187.5,427.1 184.9,429.4 182.7,432.0 180.0,434.0 176.6,434.3 173.5,432.9 171.6,430.1 171.3,426.7 172.8,423.7 175.3,421.4 177.8,419.0 180.3,416.7 183.0,414.6 185.7,412.5 186.9,411.6 188.1,410.7 189.4,409.8 190.7,408.9 191.9,408.1 193.2,407.3 194.5,406.5 195.9,405.7 197.2,405.0 198.5,404.2 199.9,403.5 201.2,402.8 202.6,402.1 204.0,401.4 203.7,400.4 202.8,399.1 202.4,397.5 202.3,395.9" fill="none" stroke="none" marker-start="url(#ns)" marker-mid="url(#ns)" marker-end="url(#ns)"/><pattern id="nz" width="16" height="16" patternUnits="userSpaceOnUse" shape-rendering="crispEdges"><rect x="0" y="0" width="1" height="1" fill="#f2e800"/><rect x="1" y="0" width="1" height="1" fill="#1a1ad0"/><rect x="2" y="0" width="1" height="1" fill="#ffff00"/><rect x="3" y="0" width="1" height="1" fill="#ffff00"/><rect x="4" y="0" width="1" height="1" fill="#0000ff"/><rect x="5" y="0" width="1" height="1" fill="#0000ff"/><rect x="6" y="0" width="1" height="1" fill="#e8e8e8"/><rect x="7" y="0" width="1" height="1" fill="#ffffff"/><rect x="8" y="0" width="1" height="1" fill="#0000ff"/><rect x="9" y="0" width="1" height="1" fill="#f2e800"/><rect x="10" y="0" width="1" height="1" fill="#b3b3b3"/><rect x="11" y="0" width="1" height="1" fill="#0000ff"/><rect x="12" y="0" width="1" height="1" fill="#202050"/><rect x="13" y="0" width="1" height="1" fill="#ffffff"/><rect x="14" y="0" width="1" height="1" fill="#00008b"/><rect x="15" y="0" width="1" height="1" fill="#0000ff"/><rect x="0" y="1" width="1" height="1" fill="#0000ff"/><rect x="1" y="1" width="1" height="1" fill="#ffff00"/><rect x="2" y="1" width="1" height="1" fill="#ffff00"/><rect x="3" y="1" width="1" height="1" fill="#0000ff"/><rect x="4" y="1" width="1" height="1" fill="#00008b"/><rect x="5" y="1" width="1" height="1" fill="#0000ff"/><rect x="6" y="1" width="1" height="1" fill="#ffffff"/><rect x="7" y="1" width="1" height="1" fill="#ffff00"/><rect x="8" y="1" width="1" height="1" fill="#0000ff"/><rect x="9" y="1" width="1" height="1" fill="#e8e8e8"/><rect x="10" y="1" width="1" height="1" fill="#b3b3b3"/><rect x="11" y="1" width="1" height="1" fill="#0000ff"/><rect x="12" y="1" width="1" height="1" fill="#00008b"/><rect x="13" y="1" width="1" height="1" fill="#ffff00"/><rect x="14" y="1" width="1" height="1" fill="#ffff00"/><rect x="15" y="1" width="1" height="1" fill="#b3b3b3"/><rect x="0" y="2" width="1" height="1" fill="#0000ff"/><rect x="1" y="2" width="1" height="1" fill="#b3b3b3"/><rect x="2" y="2" width="1" height="1" fill="#b3b3b3"/><rect x="3" y="2" width="1" height="1" fill="#ffff00"/><rect x="4" y="2" width="1" height="1" fill="#0000ff"/><rect x="5" y="2" width="1" height="1" fill="#00008b"/><rect x="6" y="2" width="1" height="1" fill="#0000ff"/><rect x="7" y="2" width="1" height="1" fill="#ffffff"/><rect x="8" y="2" width="1" height="1" fill="#e8e8e8"/><rect x="9" y="2" width="1" height="1" fill="#1a1ad0"/><rect x="10" y="2" width="1" height="1" fill="#ffff00"/><rect x="11" y="2" width="1" height="1" fill="#ffff00"/><rect x="12" y="2" width="1" height="1" fill="#1a1ad0"/><rect x="13" y="2" width="1" height="1" fill="#ffffff"/><rect x="14" y="2" width="1" height="1" fill="#0000ff"/><rect x="15" y="2" width="1" height="1" fill="#b3b3b3"/><rect x="0" y="3" width="1" height="1" fill="#ffff00"/><rect x="1" y="3" width="1" height="1" fill="#ffffff"/><rect x="2" y="3" width="1" height="1" fill="#e8e8e8"/><rect x="3" y="3" width="1" height="1" fill="#ffff00"/><rect x="4" y="3" width="1" height="1" fill="#1a1ad0"/><rect x="5" y="3" width="1" height="1" fill="#0000ff"/><rect x="6" y="3" width="1" height="1" fill="#b3b3b3"/><rect x="7" y="3" width="1" height="1" fill="#b3b3b3"/><rect x="8" y="3" width="1" height="1" fill="#ffff00"/><rect x="9" y="3" width="1" height="1" fill="#00008b"/><rect x="10" y="3" width="1" height="1" fill="#f2e800"/><rect x="11" y="3" width="1" height="1" fill="#0000ff"/><rect x="12" y="3" width="1" height="1" fill="#ffffff"/><rect x="13" y="3" width="1" height="1" fill="#f4f0a0"/><rect x="14" y="3" width="1" height="1" fill="#0000ff"/><rect x="15" y="3" width="1" height="1" fill="#b3b3b3"/><rect x="0" y="4" width="1" height="1" fill="#0000ff"/><rect x="1" y="4" width="1" height="1" fill="#b3b3b3"/><rect x="2" y="4" width="1" height="1" fill="#00008b"/><rect x="3" y="4" width="1" height="1" fill="#ffff30"/><rect x="4" y="4" width="1" height="1" fill="#ffff00"/><rect x="5" y="4" width="1" height="1" fill="#ffffff"/><rect x="6" y="4" width="1" height="1" fill="#ffff00"/><rect x="7" y="4" width="1" height="1" fill="#ffffff"/><rect x="8" y="4" width="1" height="1" fill="#f2e800"/><rect x="9" y="4" width="1" height="1" fill="#ffff30"/><rect x="10" y="4" width="1" height="1" fill="#b3b3b3"/><rect x="11" y="4" width="1" height="1" fill="#202050"/><rect x="12" y="4" width="1" height="1" fill="#ffff30"/><rect x="13" y="4" width="1" height="1" fill="#f2e800"/><rect x="14" y="4" width="1" height="1" fill="#ffff00"/><rect x="15" y="4" width="1" height="1" fill="#00008b"/><rect x="0" y="5" width="1" height="1" fill="#ffffff"/><rect x="1" y="5" width="1" height="1" fill="#1a1ad0"/><rect x="2" y="5" width="1" height="1" fill="#f4f0a0"/><rect x="3" y="5" width="1" height="1" fill="#ffffff"/><rect x="4" y="5" width="1" height="1" fill="#00008b"/><rect x="5" y="5" width="1" height="1" fill="#0000ff"/><rect x="6" y="5" width="1" height="1" fill="#b3b3b3"/><rect x="7" y="5" width="1" height="1" fill="#ffff00"/><rect x="8" y="5" width="1" height="1" fill="#ffffff"/><rect x="9" y="5" width="1" height="1" fill="#ffff30"/><rect x="10" y="5" width="1" height="1" fill="#202050"/><rect x="11" y="5" width="1" height="1" fill="#f2e800"/><rect x="12" y="5" width="1" height="1" fill="#f4f0a0"/><rect x="13" y="5" width="1" height="1" fill="#ffff30"/><rect x="14" y="5" width="1" height="1" fill="#ffff00"/><rect x="15" y="5" width="1" height="1" fill="#b3b3b3"/><rect x="0" y="6" width="1" height="1" fill="#0000ff"/><rect x="1" y="6" width="1" height="1" fill="#0000ff"/><rect x="2" y="6" width="1" height="1" fill="#ffffff"/><rect x="3" y="6" width="1" height="1" fill="#ffff00"/><rect x="4" y="6" width="1" height="1" fill="#1a1ad0"/><rect x="5" y="6" width="1" height="1" fill="#ffffff"/><rect x="6" y="6" width="1" height="1" fill="#f2e800"/><rect x="7" y="6" width="1" height="1" fill="#1a1ad0"/><rect x="8" y="6" width="1" height="1" fill="#202050"/><rect x="9" y="6" width="1" height="1" fill="#ffff30"/><rect x="10" y="6" width="1" height="1" fill="#ffff00"/><rect x="11" y="6" width="1" height="1" fill="#0000ff"/><rect x="12" y="6" width="1" height="1" fill="#ffff00"/><rect x="13" y="6" width="1" height="1" fill="#0000ff"/><rect x="14" y="6" width="1" height="1" fill="#ffffff"/><rect x="15" y="6" width="1" height="1" fill="#ffffff"/><rect x="0" y="7" width="1" height="1" fill="#b3b3b3"/><rect x="1" y="7" width="1" height="1" fill="#ffffff"/><rect x="2" y="7" width="1" height="1" fill="#202050"/><rect x="3" y="7" width="1" height="1" fill="#e8e8e8"/><rect x="4" y="7" width="1" height="1" fill="#f2e800"/><rect x="5" y="7" width="1" height="1" fill="#f2e800"/><rect x="6" y="7" width="1" height="1" fill="#f4f0a0"/><rect x="7" y="7" width="1" height="1" fill="#f2e800"/><rect x="8" y="7" width="1" height="1" fill="#b3b3b3"/><rect x="9" y="7" width="1" height="1" fill="#ffff30"/><rect x="10" y="7" width="1" height="1" fill="#b3b3b3"/><rect x="11" y="7" width="1" height="1" fill="#ffffff"/><rect x="12" y="7" width="1" height="1" fill="#ffff30"/><rect x="13" y="7" width="1" height="1" fill="#0000ff"/><rect x="14" y="7" width="1" height="1" fill="#e8e8e8"/><rect x="15" y="7" width="1" height="1" fill="#0000ff"/><rect x="0" y="8" width="1" height="1" fill="#ffff00"/><rect x="1" y="8" width="1" height="1" fill="#ffff30"/><rect x="2" y="8" width="1" height="1" fill="#f4f0a0"/><rect x="3" y="8" width="1" height="1" fill="#ffff00"/><rect x="4" y="8" width="1" height="1" fill="#0000ff"/><rect x="5" y="8" width="1" height="1" fill="#0000ff"/><rect x="6" y="8" width="1" height="1" fill="#f4f0a0"/><rect x="7" y="8" width="1" height="1" fill="#f4f0a0"/><rect x="8" y="8" width="1" height="1" fill="#ffff00"/><rect x="9" y="8" width="1" height="1" fill="#ffff00"/><rect x="10" y="8" width="1" height="1" fill="#b3b3b3"/><rect x="11" y="8" width="1" height="1" fill="#ffff00"/><rect x="12" y="8" width="1" height="1" fill="#e8e8e8"/><rect x="13" y="8" width="1" height="1" fill="#ffff30"/><rect x="14" y="8" width="1" height="1" fill="#ffff00"/><rect x="15" y="8" width="1" height="1" fill="#f4f0a0"/><rect x="0" y="9" width="1" height="1" fill="#ffff00"/><rect x="1" y="9" width="1" height="1" fill="#202050"/><rect x="2" y="9" width="1" height="1" fill="#ffff00"/><rect x="3" y="9" width="1" height="1" fill="#f2e800"/><rect x="4" y="9" width="1" height="1" fill="#0000ff"/><rect x="5" y="9" width="1" height="1" fill="#ffff30"/><rect x="6" y="9" width="1" height="1" fill="#f2e800"/><rect x="7" y="9" width="1" height="1" fill="#1a1ad0"/><rect x="8" y="9" width="1" height="1" fill="#b3b3b3"/><rect x="9" y="9" width="1" height="1" fill="#0000ff"/><rect x="10" y="9" width="1" height="1" fill="#ffff30"/><rect x="11" y="9" width="1" height="1" fill="#0000ff"/><rect x="12" y="9" width="1" height="1" fill="#00008b"/><rect x="13" y="9" width="1" height="1" fill="#ffffff"/><rect x="14" y="9" width="1" height="1" fill="#ffff00"/><rect x="15" y="9" width="1" height="1" fill="#1a1ad0"/><rect x="0" y="10" width="1" height="1" fill="#f4f0a0"/><rect x="1" y="10" width="1" height="1" fill="#00008b"/><rect x="2" y="10" width="1" height="1" fill="#ffff00"/><rect x="3" y="10" width="1" height="1" fill="#ffff00"/><rect x="4" y="10" width="1" height="1" fill="#202050"/><rect x="5" y="10" width="1" height="1" fill="#e8e8e8"/><rect x="6" y="10" width="1" height="1" fill="#ffff30"/><rect x="7" y="10" width="1" height="1" fill="#0000ff"/><rect x="8" y="10" width="1" height="1" fill="#1a1ad0"/><rect x="9" y="10" width="1" height="1" fill="#ffff30"/><rect x="10" y="10" width="1" height="1" fill="#ffff00"/><rect x="11" y="10" width="1" height="1" fill="#ffffff"/><rect x="12" y="10" width="1" height="1" fill="#ffff00"/><rect x="13" y="10" width="1" height="1" fill="#202050"/><rect x="14" y="10" width="1" height="1" fill="#1a1ad0"/><rect x="15" y="10" width="1" height="1" fill="#e8e8e8"/><rect x="0" y="11" width="1" height="1" fill="#ffff00"/><rect x="1" y="11" width="1" height="1" fill="#e8e8e8"/><rect x="2" y="11" width="1" height="1" fill="#ffffff"/><rect x="3" y="11" width="1" height="1" fill="#ffff00"/><rect x="4" y="11" width="1" height="1" fill="#f4f0a0"/><rect x="5" y="11" width="1" height="1" fill="#ffff00"/><rect x="6" y="11" width="1" height="1" fill="#f2e800"/><rect x="7" y="11" width="1" height="1" fill="#ffff00"/><rect x="8" y="11" width="1" height="1" fill="#202050"/><rect x="9" y="11" width="1" height="1" fill="#ffff00"/><rect x="10" y="11" width="1" height="1" fill="#00008b"/><rect x="11" y="11" width="1" height="1" fill="#1a1ad0"/><rect x="12" y="11" width="1" height="1" fill="#0000ff"/><rect x="13" y="11" width="1" height="1" fill="#1a1ad0"/><rect x="14" y="11" width="1" height="1" fill="#1a1ad0"/><rect x="15" y="11" width="1" height="1" fill="#00008b"/><rect x="0" y="12" width="1" height="1" fill="#ffff00"/><rect x="1" y="12" width="1" height="1" fill="#00008b"/><rect x="2" y="12" width="1" height="1" fill="#0000ff"/><rect x="3" y="12" width="1" height="1" fill="#ffff30"/><rect x="4" y="12" width="1" height="1" fill="#e8e8e8"/><rect x="5" y="12" width="1" height="1" fill="#b3b3b3"/><rect x="6" y="12" width="1" height="1" fill="#1a1ad0"/><rect x="7" y="12" width="1" height="1" fill="#ffff00"/><rect x="8" y="12" width="1" height="1" fill="#ffff00"/><rect x="9" y="12" width="1" height="1" fill="#0000ff"/><rect x="10" y="12" width="1" height="1" fill="#1a1ad0"/><rect x="11" y="12" width="1" height="1" fill="#ffff00"/><rect x="12" y="12" width="1" height="1" fill="#ffffff"/><rect x="13" y="12" width="1" height="1" fill="#f2e800"/><rect x="14" y="12" width="1" height="1" fill="#b3b3b3"/><rect x="15" y="12" width="1" height="1" fill="#b3b3b3"/><rect x="0" y="13" width="1" height="1" fill="#f2e800"/><rect x="1" y="13" width="1" height="1" fill="#1a1ad0"/><rect x="2" y="13" width="1" height="1" fill="#f4f0a0"/><rect x="3" y="13" width="1" height="1" fill="#e8e8e8"/><rect x="4" y="13" width="1" height="1" fill="#ffffff"/><rect x="5" y="13" width="1" height="1" fill="#b3b3b3"/><rect x="6" y="13" width="1" height="1" fill="#ffff00"/><rect x="7" y="13" width="1" height="1" fill="#ffff00"/><rect x="8" y="13" width="1" height="1" fill="#f4f0a0"/><rect x="9" y="13" width="1" height="1" fill="#0000ff"/><rect x="10" y="13" width="1" height="1" fill="#ffff30"/><rect x="11" y="13" width="1" height="1" fill="#202050"/><rect x="12" y="13" width="1" height="1" fill="#e8e8e8"/><rect x="13" y="13" width="1" height="1" fill="#ffffff"/><rect x="14" y="13" width="1" height="1" fill="#e8e8e8"/><rect x="15" y="13" width="1" height="1" fill="#ffff00"/><rect x="0" y="14" width="1" height="1" fill="#ffffff"/><rect x="1" y="14" width="1" height="1" fill="#ffffff"/><rect x="2" y="14" width="1" height="1" fill="#ffff00"/><rect x="3" y="14" width="1" height="1" fill="#ffff00"/><rect x="4" y="14" width="1" height="1" fill="#ffff00"/><rect x="5" y="14" width="1" height="1" fill="#ffff00"/><rect x="6" y="14" width="1" height="1" fill="#0000ff"/><rect x="7" y="14" width="1" height="1" fill="#ffff30"/><rect x="8" y="14" width="1" height="1" fill="#ffff00"/><rect x="9" y="14" width="1" height="1" fill="#ffff00"/><rect x="10" y="14" width="1" height="1" fill="#0000ff"/><rect x="11" y="14" width="1" height="1" fill="#00008b"/><rect x="12" y="14" width="1" height="1" fill="#0000ff"/><rect x="13" y="14" width="1" height="1" fill="#00008b"/><rect x="14" y="14" width="1" height="1" fill="#ffff30"/><rect x="15" y="14" width="1" height="1" fill="#1a1ad0"/><rect x="0" y="15" width="1" height="1" fill="#0000ff"/><rect x="1" y="15" width="1" height="1" fill="#f2e800"/><rect x="2" y="15" width="1" height="1" fill="#b3b3b3"/><rect x="3" y="15" width="1" height="1" fill="#0000ff"/><rect x="4" y="15" width="1" height="1" fill="#0000ff"/><rect x="5" y="15" width="1" height="1" fill="#0000ff"/><rect x="6" y="15" width="1" height="1" fill="#b3b3b3"/><rect x="7" y="15" width="1" height="1" fill="#1a1ad0"/><rect x="8" y="15" width="1" height="1" fill="#ffffff"/><rect x="9" y="15" width="1" height="1" fill="#0000ff"/><rect x="10" y="15" width="1" height="1" fill="#f2e800"/><rect x="11" y="15" width="1" height="1" fill="#b3b3b3"/><rect x="12" y="15" width="1" height="1" fill="#0000ff"/><rect x="13" y="15" width="1" height="1" fill="#0000ff"/><rect x="14" y="15" width="1" height="1" fill="#e8e8e8"/><rect x="15" y="15" width="1" height="1" fill="#00008b"/></pattern><pattern id="nz2" width="16" height="16" patternUnits="userSpaceOnUse" shape-rendering="crispEdges"><rect x="1" y="0" width="1" height="1" fill="#ffff00"/><rect x="5" y="0" width="1" height="1" fill="#ffff30"/><rect x="9" y="0" width="1" height="1" fill="#0000ff"/><rect x="15" y="0" width="1" height="1" fill="#f2e800"/><rect x="0" y="1" width="1" height="1" fill="#0000ff"/><rect x="2" y="1" width="1" height="1" fill="#0000ff"/><rect x="4" y="1" width="1" height="1" fill="#f2e800"/><rect x="6" y="1" width="1" height="1" fill="#00008b"/><rect x="9" y="1" width="1" height="1" fill="#00008b"/><rect x="13" y="1" width="1" height="1" fill="#00008b"/><rect x="0" y="2" width="1" height="1" fill="#ffff30"/><rect x="1" y="2" width="1" height="1" fill="#0000ff"/><rect x="5" y="2" width="1" height="1" fill="#f2e800"/><rect x="6" y="2" width="1" height="1" fill="#f2e800"/><rect x="8" y="2" width="1" height="1" fill="#00008b"/><rect x="9" y="2" width="1" height="1" fill="#ffff30"/><rect x="10" y="2" width="1" height="1" fill="#00008b"/><rect x="14" y="2" width="1" height="1" fill="#f2e800"/><rect x="0" y="3" width="1" height="1" fill="#0000ff"/><rect x="5" y="3" width="1" height="1" fill="#f2e800"/><rect x="6" y="3" width="1" height="1" fill="#ffff00"/><rect x="9" y="3" width="1" height="1" fill="#1a1ad0"/><rect x="10" y="3" width="1" height="1" fill="#1a1ad0"/><rect x="11" y="3" width="1" height="1" fill="#ffff30"/><rect x="13" y="3" width="1" height="1" fill="#ffff30"/><rect x="15" y="3" width="1" height="1" fill="#1a1ad0"/><rect x="0" y="4" width="1" height="1" fill="#0000ff"/><rect x="3" y="4" width="1" height="1" fill="#00008b"/><rect x="5" y="4" width="1" height="1" fill="#ffff00"/><rect x="6" y="4" width="1" height="1" fill="#00008b"/><rect x="8" y="4" width="1" height="1" fill="#ffff00"/><rect x="10" y="4" width="1" height="1" fill="#f2e800"/><rect x="1" y="5" width="1" height="1" fill="#1a1ad0"/><rect x="3" y="5" width="1" height="1" fill="#ffff30"/><rect x="7" y="5" width="1" height="1" fill="#1a1ad0"/><rect x="11" y="5" width="1" height="1" fill="#ffff30"/><rect x="13" y="5" width="1" height="1" fill="#0000ff"/><rect x="14" y="5" width="1" height="1" fill="#ffff00"/><rect x="15" y="5" width="1" height="1" fill="#0000ff"/><rect x="4" y="6" width="1" height="1" fill="#00008b"/><rect x="13" y="6" width="1" height="1" fill="#00008b"/><rect x="15" y="6" width="1" height="1" fill="#0000ff"/><rect x="0" y="7" width="1" height="1" fill="#f2e800"/><rect x="1" y="7" width="1" height="1" fill="#00008b"/><rect x="2" y="7" width="1" height="1" fill="#00008b"/><rect x="6" y="7" width="1" height="1" fill="#f2e800"/><rect x="7" y="7" width="1" height="1" fill="#1a1ad0"/><rect x="9" y="7" width="1" height="1" fill="#0000ff"/><rect x="10" y="7" width="1" height="1" fill="#ffff30"/><rect x="11" y="7" width="1" height="1" fill="#00008b"/><rect x="12" y="7" width="1" height="1" fill="#ffff00"/><rect x="14" y="7" width="1" height="1" fill="#ffff00"/><rect x="15" y="7" width="1" height="1" fill="#f2e800"/><rect x="0" y="8" width="1" height="1" fill="#f2e800"/><rect x="1" y="8" width="1" height="1" fill="#ffff30"/><rect x="2" y="8" width="1" height="1" fill="#0000ff"/><rect x="3" y="8" width="1" height="1" fill="#ffff00"/><rect x="5" y="8" width="1" height="1" fill="#00008b"/><rect x="7" y="8" width="1" height="1" fill="#ffff00"/><rect x="8" y="8" width="1" height="1" fill="#1a1ad0"/><rect x="9" y="8" width="1" height="1" fill="#1a1ad0"/><rect x="14" y="8" width="1" height="1" fill="#ffff30"/><rect x="0" y="9" width="1" height="1" fill="#0000ff"/><rect x="2" y="9" width="1" height="1" fill="#0000ff"/><rect x="3" y="9" width="1" height="1" fill="#0000ff"/><rect x="6" y="9" width="1" height="1" fill="#00008b"/><rect x="7" y="9" width="1" height="1" fill="#0000ff"/><rect x="9" y="9" width="1" height="1" fill="#ffff00"/><rect x="11" y="9" width="1" height="1" fill="#1a1ad0"/><rect x="12" y="9" width="1" height="1" fill="#00008b"/><rect x="15" y="9" width="1" height="1" fill="#1a1ad0"/><rect x="0" y="10" width="1" height="1" fill="#ffff00"/><rect x="3" y="10" width="1" height="1" fill="#ffff30"/><rect x="5" y="10" width="1" height="1" fill="#f2e800"/><rect x="8" y="10" width="1" height="1" fill="#0000ff"/><rect x="11" y="10" width="1" height="1" fill="#ffff30"/><rect x="12" y="10" width="1" height="1" fill="#ffff30"/><rect x="13" y="10" width="1" height="1" fill="#ffff00"/><rect x="2" y="11" width="1" height="1" fill="#00008b"/><rect x="4" y="11" width="1" height="1" fill="#1a1ad0"/><rect x="5" y="11" width="1" height="1" fill="#f2e800"/><rect x="8" y="11" width="1" height="1" fill="#ffff00"/><rect x="9" y="11" width="1" height="1" fill="#0000ff"/><rect x="10" y="11" width="1" height="1" fill="#ffff00"/><rect x="13" y="11" width="1" height="1" fill="#00008b"/><rect x="15" y="11" width="1" height="1" fill="#1a1ad0"/><rect x="0" y="12" width="1" height="1" fill="#ffff30"/><rect x="1" y="12" width="1" height="1" fill="#f2e800"/><rect x="5" y="12" width="1" height="1" fill="#ffff00"/><rect x="6" y="12" width="1" height="1" fill="#1a1ad0"/><rect x="7" y="12" width="1" height="1" fill="#ffff00"/><rect x="8" y="12" width="1" height="1" fill="#ffff00"/><rect x="10" y="12" width="1" height="1" fill="#0000ff"/><rect x="11" y="12" width="1" height="1" fill="#0000ff"/><rect x="12" y="12" width="1" height="1" fill="#0000ff"/><rect x="13" y="12" width="1" height="1" fill="#ffff00"/><rect x="14" y="12" width="1" height="1" fill="#00008b"/><rect x="15" y="12" width="1" height="1" fill="#1a1ad0"/><rect x="3" y="13" width="1" height="1" fill="#f2e800"/><rect x="6" y="13" width="1" height="1" fill="#1a1ad0"/><rect x="7" y="13" width="1" height="1" fill="#ffff00"/><rect x="10" y="13" width="1" height="1" fill="#0000ff"/><rect x="0" y="14" width="1" height="1" fill="#0000ff"/><rect x="1" y="14" width="1" height="1" fill="#f2e800"/><rect x="3" y="14" width="1" height="1" fill="#ffff30"/><rect x="9" y="14" width="1" height="1" fill="#0000ff"/><rect x="14" y="14" width="1" height="1" fill="#ffff30"/><rect x="15" y="14" width="1" height="1" fill="#0000ff"/><rect x="1" y="15" width="1" height="1" fill="#00008b"/><rect x="2" y="15" width="1" height="1" fill="#ffff30"/><rect x="4" y="15" width="1" height="1" fill="#ffff30"/><rect x="6" y="15" width="1" height="1" fill="#0000ff"/><rect x="9" y="15" width="1" height="1" fill="#1a1ad0"/><rect x="10" y="15" width="1" height="1" fill="#ffff00"/><rect x="12" y="15" width="1" height="1" fill="#ffff30"/><rect x="13" y="15" width="1" height="1" fill="#ffff00"/><rect x="15" y="15" width="1" height="1" fill="#00008b"/></pattern><path d="M491.1,455.5 490.9,457.6 490.9,459.6 490.2,461.6 489.0,463.2 487.3,464.4 485.3,465.0 483.3,464.9 481.3,464.2 479.7,462.9 478.6,461.2 478.0,459.2 478.1,457.2 477.9,455.7 477.6,454.2 477.2,452.7 476.8,451.2 476.3,449.8 475.7,448.4 475.1,447.0 474.4,445.6 473.7,444.2 472.9,442.9 472.1,441.6 471.3,440.3 470.4,439.1 469.5,437.8 468.2,436.2 466.9,434.6 465.6,433.1 464.1,431.5 462.7,430.1 461.2,429.2 459.7,430.6 458.3,432.1 456.9,433.7 455.6,435.2 454.3,436.8 453.0,438.5 451.8,440.2 450.7,441.9 449.9,443.3 449.1,444.7 448.3,446.2 447.6,447.6 447.0,449.1 446.4,450.6 445.9,452.2 445.5,453.7 445.1,455.3 444.9,456.9 445.0,458.5 444.8,460.1 444.2,461.6 443.3,462.9 442.1,463.9 440.8,464.6 439.3,465.0 437.8,465.0 436.3,464.6 434.9,464.0 433.7,463.0 432.8,461.7 432.3,460.3 432.0,458.8 432.1,457.3 431.9,455.8 431.6,454.3 431.3,452.8 430.5,450.4 429.6,448.1 428.5,445.8 427.3,443.6 426.0,441.4 424.6,439.3 423.1,437.3 421.5,435.3 419.9,433.4 418.2,431.6 416.4,429.8 414.6,429.8 412.8,431.6 411.1,433.4 410.0,434.7 409.0,435.9 408.0,437.2 407.0,438.5 406.1,439.8 405.2,441.1 404.3,442.5 403.5,443.9 402.7,445.3 402.0,446.8 401.3,448.3 400.7,449.8 400.2,451.3 399.7,452.8 399.3,454.6 399.0,456.4 399.0,458.1 398.8,459.9 398.2,461.6 397.2,463.1 395.8,464.2 394.1,464.8 392.3,465.0 390.5,464.7 388.9,464.0 387.6,462.8 386.6,461.3 386.1,459.6 386.1,457.8 386.0,456.0 385.6,454.2 385.2,452.5 384.6,450.8 384.0,449.1 383.3,447.4 382.5,445.8 381.7,444.2 380.8,442.7 379.8,441.1 378.8,439.6 377.8,438.2 376.7,436.7 375.7,435.5 374.6,434.2 373.5,433.0 372.4,431.8 371.3,430.7 370.2,429.5 369.0,429.4 367.8,430.5 366.7,431.7 365.6,432.9 364.5,434.1 363.5,435.3 362.5,436.6 361.5,437.9 359.5,440.7 357.7,443.6 356.1,446.6 354.7,449.7 353.7,453.0 353.0,456.3 352.9,459.7 351.4,462.8 348.6,464.7 345.3,464.9 342.2,463.4 340.4,460.6 340.1,457.3 339.6,453.9 338.6,450.6 337.3,447.5 335.8,444.4 334.0,441.5 332.1,438.6 330.0,435.9 327.8,433.3 325.5,430.8 323.0,429.4 320.6,431.8 318.3,434.3 316.1,437.0 314.1,439.7 312.3,442.6 311.4,444.2 310.5,445.8 309.7,447.4 309.0,449.0 308.4,450.7 307.8,452.4 307.4,454.2 307.0,455.9 306.9,457.7 306.9,459.5 306.4,461.2 305.5,462.8 304.1,464.0 302.5,464.7 300.9,465.0 299.3,464.9 297.8,464.4 296.4,463.6 295.3,462.4 294.5,461.0 294.1,459.4 294.0,457.8 294.0,456.2 293.7,454.6 293.3,453.1 292.9,451.5 292.3,450.0 291.7,448.5 290.3,445.4 288.6,442.4 286.7,439.5" fill="none" stroke="url(#nz2)" stroke-width="10.800" stroke-linejoin="round" stroke-linecap="round"/><path d="M491.1,455.5 490.9,457.6 490.9,459.6 490.2,461.6 489.0,463.2 487.3,464.4 485.3,465.0 483.3,464.9 481.3,464.2 479.7,462.9 478.6,461.2 478.0,459.2 478.1,457.2 477.9,455.7 477.6,454.2 477.2,452.7 476.8,451.2 476.3,449.8 475.7,448.4 475.1,447.0 474.4,445.6 473.7,444.2 472.9,442.9 472.1,441.6 471.3,440.3 470.4,439.1 469.5,437.8 468.2,436.2 466.9,434.6 465.6,433.1 464.1,431.5 462.7,430.1 461.2,429.2 459.7,430.6 458.3,432.1 456.9,433.7 455.6,435.2 454.3,436.8 453.0,438.5 451.8,440.2 450.7,441.9 449.9,443.3 449.1,444.7 448.3,446.2 447.6,447.6 447.0,449.1 446.4,450.6 445.9,452.2 445.5,453.7 445.1,455.3 444.9,456.9 445.0,458.5 444.8,460.1 444.2,461.6 443.3,462.9 442.1,463.9 440.8,464.6 439.3,465.0 437.8,465.0 436.3,464.6 434.9,464.0 433.7,463.0 432.8,461.7 432.3,460.3 432.0,458.8 432.1,457.3 431.9,455.8 431.6,454.3 431.3,452.8 430.5,450.4 429.6,448.1 428.5,445.8 427.3,443.6 426.0,441.4 424.6,439.3 423.1,437.3 421.5,435.3 419.9,433.4 418.2,431.6 416.4,429.8 414.6,429.8 412.8,431.6 411.1,433.4 410.0,434.7 409.0,435.9 408.0,437.2 407.0,438.5 406.1,439.8 405.2,441.1 404.3,442.5 403.5,443.9 402.7,445.3 402.0,446.8 401.3,448.3 400.7,449.8 400.2,451.3 399.7,452.8 399.3,454.6 399.0,456.4 399.0,458.1 398.8,459.9 398.2,461.6 397.2,463.1 395.8,464.2 394.1,464.8 392.3,465.0 390.5,464.7 388.9,464.0 387.6,462.8 386.6,461.3 386.1,459.6 386.1,457.8 386.0,456.0 385.6,454.2 385.2,452.5 384.6,450.8 384.0,449.1 383.3,447.4 382.5,445.8 381.7,444.2 380.8,442.7 379.8,441.1 378.8,439.6 377.8,438.2 376.7,436.7 375.7,435.5 374.6,434.2 373.5,433.0 372.4,431.8 371.3,430.7 370.2,429.5 369.0,429.4 367.8,430.5 366.7,431.7 365.6,432.9 364.5,434.1 363.5,435.3 362.5,436.6 361.5,437.9 359.5,440.7 357.7,443.6 356.1,446.6 354.7,449.7 353.7,453.0 353.0,456.3 352.9,459.7 351.4,462.8 348.6,464.7 345.3,464.9 342.2,463.4 340.4,460.6 340.1,457.3 339.6,453.9 338.6,450.6 337.3,447.5 335.8,444.4 334.0,441.5 332.1,438.6 330.0,435.9 327.8,433.3 325.5,430.8 323.0,429.4 320.6,431.8 318.3,434.3 316.1,437.0 314.1,439.7 312.3,442.6 311.4,444.2 310.5,445.8 309.7,447.4 309.0,449.0 308.4,450.7 307.8,452.4 307.4,454.2 307.0,455.9 306.9,457.7 306.9,459.5 306.4,461.2 305.5,462.8 304.1,464.0 302.5,464.7 300.9,465.0 299.3,464.9 297.8,464.4 296.4,463.6 295.3,462.4 294.5,461.0 294.1,459.4 294.0,457.8 294.0,456.2 293.7,454.6 293.3,453.1 292.9,451.5 292.3,450.0 291.7,448.5 290.3,445.4 288.6,442.4 286.7,439.5" fill="none" stroke="url(#nz)" stroke-width="8.200" stroke-linejoin="round" stroke-linecap="round"/><rect x="169.5" y="428.5" width="5.6" height="5.6" fill="#c0c0c0" stroke="#161616" stroke-width="0.950" shape-rendering="crispEdges"/><rect x="177.7" y="430.7" width="5.6" height="5.6" fill="#c0c0c0" stroke="#161616" stroke-width="0.950" shape-rendering="crispEdges"/><rect x="203.2" y="388.7" width="5.6" height="5.6" fill="#c0c0c0" stroke="#161616" stroke-width="0.950" shape-rendering="crispEdges"/><rect x="200.7" y="395.2" width="5.6" height="5.6" fill="#c0c0c0" stroke="#161616" stroke-width="0.950" shape-rendering="crispEdges"/><rect x="209.2" y="455.2" width="5.6" height="5.6" fill="#c0c0c0" stroke="#161616" stroke-width="0.950" shape-rendering="crispEdges"/><rect x="207.7" y="460.7" width="5.6" height="5.6" fill="#c0c0c0" stroke="#161616" stroke-width="0.950" shape-rendering="crispEdges"/><rect x="252.7" y="460.2" width="5.6" height="5.6" fill="#c0c0c0" stroke="#161616" stroke-width="0.950" shape-rendering="crispEdges"/><rect x="609.2" y="422.7" width="5.6" height="5.6" fill="#c0c0c0" stroke="#161616" stroke-width="0.950" shape-rendering="crispEdges"/><rect x="607.2" y="430.4" width="5.6" height="5.6" fill="#c0c0c0" stroke="#161616" stroke-width="0.950" shape-rendering="crispEdges"/><rect x="579.7" y="390.7" width="5.6" height="5.6" fill="#c0c0c0" stroke="#161616" stroke-width="0.950" shape-rendering="crispEdges"/><rect x="570.2" y="460.7" width="5.6" height="5.6" fill="#c0c0c0" stroke="#161616" stroke-width="0.950" shape-rendering="crispEdges"/><rect x="528.2" y="459.2" width="5.6" height="5.6" fill="#c0c0c0" stroke="#161616" stroke-width="0.950" shape-rendering="crispEdges"/><rect x="171.5" y="391.5" width="442" height="74" fill="none" stroke="#4a4a4a" stroke-width="1" stroke-dasharray="3.2 3"/></g><path d="M498.5,501.5V518.8L502.3,515.3L504.6,520.6L507.3,519.5L505,514.2L510.2,513.9Z" fill="#fff" stroke="#000" stroke-width="1.1" stroke-linejoin="miter"/></svg><svg width="786" height="642" viewBox="0 0 786 642"><defs><linearGradient id="gtrough" x1="0" y1="0" x2="0" y2="1"><stop offset="0" stop-color="#d6d4d0"/><stop offset="1" stop-color="#e6e4e1"/></linearGradient><linearGradient id="gthumb" x1="0" y1="0" x2="0" y2="1"><stop offset="0" stop-color="#fdfdfc"/><stop offset="1" stop-color="#e0deda"/></linearGradient><linearGradient id="gtroughv" x1="0" y1="0" x2="1" y2="0"><stop offset="0" stop-color="#d6d4d0"/><stop offset="1" stop-color="#e6e4e1"/></linearGradient><linearGradient id="gthumbv" x1="0" y1="0" x2="1" y2="0"><stop offset="0" stop-color="#fdfdfc"/><stop offset="1" stop-color="#e0deda"/></linearGradient><linearGradient id="glayer" x1="0" y1="0" x2="0" y2="1"><stop offset="0" stop-color="#d8d6d3"/><stop offset="1" stop-color="#e6e5e2"/></linearGradient></defs><rect x="50.5" y="559.5" width="674" height="12" rx="6.0" fill="url(#gtrough)" stroke="#b3b1ad" stroke-width="1"/><path d="M56.5,560H63V571H56.5A5.5,5.5 0 0 1 56.5,560z" fill="#f7f6f5"/><path d="M718.5,560H712V571H718.5A5.5,5.5 0 0 0 718.5,560z" fill="#f7f6f5"/><rect x="69.5" y="559.5" width="641" height="12" rx="6.0" fill="url(#gthumb)" stroke="#a19f9b" stroke-width="1"/><path d="M59.300,562.400v6.200l-3.600,-3.100z" fill="#55544f"/><path d="M716.800,562.400v6.200l3.600,-3.100z" fill="#55544f"/><rect x="386" y="563.500" width="1" height="4" fill="#9c9a96"/><rect x="389" y="563.500" width="1" height="4" fill="#9c9a96"/><rect x="392" y="563.500" width="1" height="4" fill="#9c9a96"/><rect x="728.500" y="151.500" width="12" height="404" rx="6" fill="url(#gtroughv)" stroke="#b3b1ad" stroke-width="1"/><path d="M729.500,158.500a5,5 0 0 1 10,0V164.500h-10z" fill="#f7f6f5"/><path d="M729.500,549a5,5 0 0 0 10,0V543h-10z" fill="#f7f6f5"/><rect x="728.500" y="330" width="12" height="211.500" rx="6" fill="url(#gthumbv)" stroke="#a19f9b" stroke-width="1"/><path d="M731.400,160.400h6.200l-3.100,-3.600z" fill="#55544f"/><path d="M731.400,546.800h6.200l-3.100,3.600z" fill="#55544f"/><rect x="732.500" y="432.5" width="4" height="1" fill="#9c9a96"/><rect x="732.500" y="435.5" width="4" height="1" fill="#9c9a96"/><rect x="732.500" y="438.5" width="4" height="1" fill="#9c9a96"/><path d="M735.600,142.400l4.200,4.200" stroke="#222" stroke-width="1.800" stroke-linecap="round"/><circle cx="733" cy="139.600" r="3.800" fill="#f4f4f2" stroke="#222" stroke-width="1.300"/><path d="M733.200,137.600v4.200M732.200,138.400l1,-0.800" stroke="#222" stroke-width="0.900" fill="none"/><path d="M730,560.400l9,6.800l-6.700,4.200z" fill="#d2d4d0" stroke="#c4c2be" stroke-width="0.800" stroke-linejoin="round"/><path d="M731.200,563l5.600,4.300l-4,2.500z" fill="#eceeea"/><g shape-rendering="crispEdges"><rect x="2" y="577" width="16" height="16" fill="#fff"/><rect x="18" y="577" width="16" height="16" fill="#000000"/><rect x="34" y="577" width="16" height="16" fill="#1a1a1a"/><rect x="50" y="577" width="16" height="16" fill="#333333"/><rect x="66" y="577" width="16" height="16" fill="#4d4d4d"/><rect x="82" y="577" width="16" height="16" fill="#666666"/><rect x="98" y="577" width="16" height="16" fill="#808080"/><rect x="114" y="577" width="16" height="16" fill="#999999"/><rect x="130" y="577" width="16" height="16" fill="#b3b3b3"/><rect x="146" y="577" width="16" height="16" fill="#cccccc"/><rect x="162" y="577" width="16" height="16" fill="#e6e6e6"/><rect x="178" y="577" width="16" height="16" fill="#ececec"/><rect x="194" y="577" width="16" height="16" fill="#f2f2f2"/><rect x="210" y="577" width="16" height="16" fill="#f9f9f9"/><rect x="226" y="577" width="16" height="16" fill="#ffffff"/><rect x="242" y="577" width="16" height="16" fill="#800000"/><rect x="258" y="577" width="16" height="16" fill="#ff0000"/><rect x="274" y="577" width="16" height="16" fill="#808000"/><rect x="290" y="577" width="16" height="16" fill="#ffff00"/><rect x="306" y="577" width="16" height="16" fill="#008000"/><rect x="322" y="577" width="16" height="16" fill="#00ff00"/><rect x="338" y="577" width="16" height="16" fill="#008080"/><rect x="354" y="577" width="16" height="16" fill="#00ffff"/><rect x="370" y="577" width="16" height="16" fill="#000080"/><rect x="386" y="577" width="16" height="16" fill="#0000ff"/><rect x="402" y="577" width="16" height="16" fill="#800080"/><rect x="418" y="577" width="16" height="16" fill="#ff00ff"/><rect x="434" y="577" width="16" height="16" fill="#2b0000"/><rect x="450" y="577" width="16" height="16" fill="#550000"/><rect x="466" y="577" width="16" height="16" fill="#800000"/><rect x="482" y="577" width="16" height="16" fill="#aa0000"/><rect x="498" y="577" width="16" height="16" fill="#d40000"/><rect x="514" y="577" width="16" height="16" fill="#ff0000"/><rect x="530" y="577" width="16" height="16" fill="#ff2a2a"/><rect x="546" y="577" width="16" height="16" fill="#ff5555"/><rect x="562" y="577" width="16" height="16" fill="#ff8080"/><rect x="578" y="577" width="16" height="16" fill="#ffaaaa"/><rect x="594" y="577" width="16" height="16" fill="#ffd5d5"/><rect x="610" y="577" width="16" height="16" fill="#280b0b"/><rect x="626" y="577" width="16" height="16" fill="#501616"/><rect x="642" y="577" width="16" height="16" fill="#782121"/><rect x="658" y="577" width="16" height="16" fill="#a02c2c"/><rect x="674" y="577" width="16" height="16" fill="#c83737"/><rect x="690" y="577" width="16" height="16" fill="#d35f5f"/><rect x="706" y="577" width="16" height="16" fill="#de8787"/><rect x="722" y="577" width="16" height="16" fill="#e9afaf"/><rect x="738" y="577" width="16" height="16" fill="#f4d7d7"/><rect x="754" y="577" width="17" height="16" fill="#241c1c"/><rect x="771" y="577" width="1.500" height="16" fill="#4a3a3a"/></g><path d="M2.500,577.500L17.500,592.500M17.500,577.500L2.500,592.500" stroke="#8b1a1a" stroke-width="1.600"/><rect x="2" y="576" width="771" height="1" fill="#b9b7b3" opacity=".7"/><rect x="2" y="593" width="771" height="1" fill="#c9c7c3" opacity=".7"/><path d="M782,579.200v7l-5,-3.500z" fill="#8a8985" stroke="#6f6e6a" stroke-width="0.600"/><rect x="2.0" y="598.5" width="769.5" height="11.5" rx="5.75" fill="url(#gtrough)" stroke="#b3b1ad" stroke-width="1"/><rect x="14.5" y="598.5" width="81.5" height="11.5" rx="5.75" fill="url(#gthumb)" stroke="#a19f9b" stroke-width="1"/><path d="M760,599h6.200a5.300,5.300 0 0 1 0,10.500H760z" fill="#f4f3f2"/><rect x="759.500" y="599" width="1" height="10.500" fill="#b9b7b3"/><path d="M1.500,604.200a5.800,5.800 0 0 1 5.800,-5.200H14v10.500H7.300a5.800,5.800 0 0 1 -5.800,-5.300z" fill="#f4f3f2"/><path d="M9.800,601.200v6.200l-3.400,-3.100z" fill="#a4a29e"/><path d="M765,601.300v6.200l3.400,-3.100z" fill="#55544f"/><rect x="51.5" y="602.300" width="1" height="4" fill="#9c9a96"/><rect x="54.5" y="602.300" width="1" height="4" fill="#9c9a96"/><rect x="57.5" y="602.300" width="1" height="4" fill="#9c9a96"/><text x="3.4" y="623.6" font-size="11" fill="#3c3c3c" font-weight="normal" textLength="47.4" lengthAdjust="spacingAndGlyphs">Заливка:</text><text x="3.4" y="637.9" font-size="11" fill="#3c3c3c" font-weight="normal" textLength="50" lengthAdjust="spacingAndGlyphs">Обводка:</text><rect x="58" y="613" width="65.700" height="13.700" fill="#adadad"/><rect x="58" y="626.700" width="56.100" height="14" fill="#1a1a1a"/><text x="117.1" y="638" font-size="10.5" fill="#3c3c3c" font-weight="normal" textLength="6.2" lengthAdjust="spacingAndGlyphs">8</text><text x="129" y="631.1" font-size="11" fill="#3c3c3c" font-weight="normal" textLength="9.8" lengthAdjust="spacingAndGlyphs">Н:</text><rect x="142.5" y="616.5" width="34.5" height="21" rx="3.2" fill="#fff" stroke="#a3a19d" stroke-width="1"/><path d="M163.5,617H174.0a2.5,2.5 0 0 1 2.5,2.5V634.5a2.5,2.5 0 0 1 -2.5,2.5H163.5z" fill="url(#gspin)"/><rect x="163.0" y="617" width="1" height="20" fill="#c4c2be"/><path d="M167.7,624.3h5.600l-2.800,-3.300z" fill="#c6c4c0"/><path d="M167.7,629.9h5.600l-2.800,3.300z" fill="#66655f"/><rect x="143" y="617" width="20.0" height="1.2" fill="#e4e2df" opacity=".8"/><clipPath id="co"><rect x="143" y="617" width="15.900" height="20"/></clipPath><g clip-path="url(#co)"><text x="147.9" y="630.8" font-size="11" fill="#3c3c3c" font-weight="normal" textLength="18.4" lengthAdjust="spacingAndGlyphs">100</text></g><rect x="181" y="613" width="1" height="27" fill="#d6d4d0"/><rect x="182" y="613" width="1" height="27" fill="#fbfbfa"/><path d="M188.200,626.400c3.600,-4.400 8.600,-4.400 12.200,0c-3.600,4 -8.600,4 -12.200,0z" fill="#fff" stroke="#111" stroke-width="1.100"/><circle cx="194.300" cy="626.300" r="2.500" fill="#111"/><path d="M190,623.200l-1.200,-1.600M192.600,622.200l-0.500,-1.900M196,622.200l0.500,-1.900M198.600,623.200l1.200,-1.600" stroke="#111" stroke-width="0.900"/><path d="M211.600,626v-2.400a2.700,2.700 0 0 1 5.400,0v1" fill="none" stroke="#333" stroke-width="1.300"/><rect x="209.800" y="626" width="8.400" height="6.200" rx="0.800" fill="#fdf6d0" stroke="#6a5a2c" stroke-width="0.900"/><rect x="211.500" y="628" width="2" height="2.400" fill="#6a5a1c"/><rect x="225.500" y="614.500" width="92" height="24.500" rx="4" fill="url(#glayer)" stroke="#a3a19d" stroke-width="1"/><text x="233" y="630.8" font-size="12" fill="#42454c" font-weight="bold" textLength="46.6" lengthAdjust="spacingAndGlyphs">•Layer 1</text><path d="M301.800,625.200h7.600l-3.800,4.700z" fill="#8c8b86"/><text x="324.9" y="631.6" font-size="15" fill="#3c3c3c" font-weight="normal" textLength="118.3" lengthAdjust="spacingAndGlyphs">Выделено узлов:</text><text x="447.3" y="631.6" font-size="15" fill="#3c3c3c" font-weight="bold" textLength="78.2" lengthAdjust="spacingAndGlyphs">430 из 1227</text><text x="526.8" y="631.6" font-size="15" fill="#3c3c3c" font-weight="normal">.</text><text x="534.8" y="631.6" font-size="15" fill="#3c3c3c" font-weight="normal" textLength="81.1" lengthAdjust="spacingAndGlyphs">Перетаски..</text><text x="620.1" y="623.8" font-size="11" fill="#3c3c3c" font-weight="normal" textLength="8.4" lengthAdjust="spacingAndGlyphs">X:</text><text x="620.1" y="638" font-size="11" fill="#3c3c3c" font-weight="normal" textLength="8.4" lengthAdjust="spacingAndGlyphs">Y:</text><text x="639" y="623.8" font-size="13.5" fill="#3c3c3c" font-weight="normal" textLength="48.4" lengthAdjust="spacingAndGlyphs" class="mono">2330,83</text><text x="633.7" y="638" font-size="13.5" fill="#3c3c3c" font-weight="normal" textLength="53.7" lengthAdjust="spacingAndGlyphs" class="mono">-2724,55</text><text x="698" y="630.9" font-size="11" fill="#3c3c3c" font-weight="normal" textLength="8.6" lengthAdjust="spacingAndGlyphs">Z:</text><rect x="710.5" y="617.0" width="53.5" height="20.0" rx="3.2" fill="#fff" stroke="#a3a19d" stroke-width="1"/><path d="M750.5,617.5H761.0a2.5,2.5 0 0 1 2.5,2.5V634.0a2.5,2.5 0 0 1 -2.5,2.5H750.5z" fill="url(#gspin)"/><rect x="750.0" y="617.5" width="1" height="19.0" fill="#c4c2be"/><path d="M754.7,624.3h5.600l-2.800,-3.300z" fill="#5f5e5a"/><path d="M754.7,629.9h5.600l-2.800,3.300z" fill="#8a8985"/><rect x="711" y="617.5" width="39.0" height="1.2" fill="#e4e2df" opacity=".8"/><text x="721.5" y="630.9" font-size="11" fill="#3c3c3c" font-weight="normal" textLength="23.1" lengthAdjust="spacingAndGlyphs">13%</text><rect x="781" y="638" width="1.300" height="1.300" fill="#b5b3af"/><rect x="781" y="635" width="1.300" height="1.300" fill="#b5b3af"/><rect x="778" y="638" width="1.300" height="1.300" fill="#b5b3af"/><rect x="781" y="632" width="1.300" height="1.300" fill="#b5b3af"/><rect x="778" y="635" width="1.300" height="1.300" fill="#b5b3af"/><rect x="775" y="638" width="1.300" height="1.300" fill="#b5b3af"/><rect x="781" y="629" width="1.300" height="1.300" fill="#b5b3af"/><rect x="778" y="632" width="1.300" height="1.300" fill="#b5b3af"/><rect x="775" y="635" width="1.300" height="1.300" fill="#b5b3af"/><rect x="772" y="638" width="1.300" height="1.300" fill="#b5b3af"/></svg>
</div></body></html>
